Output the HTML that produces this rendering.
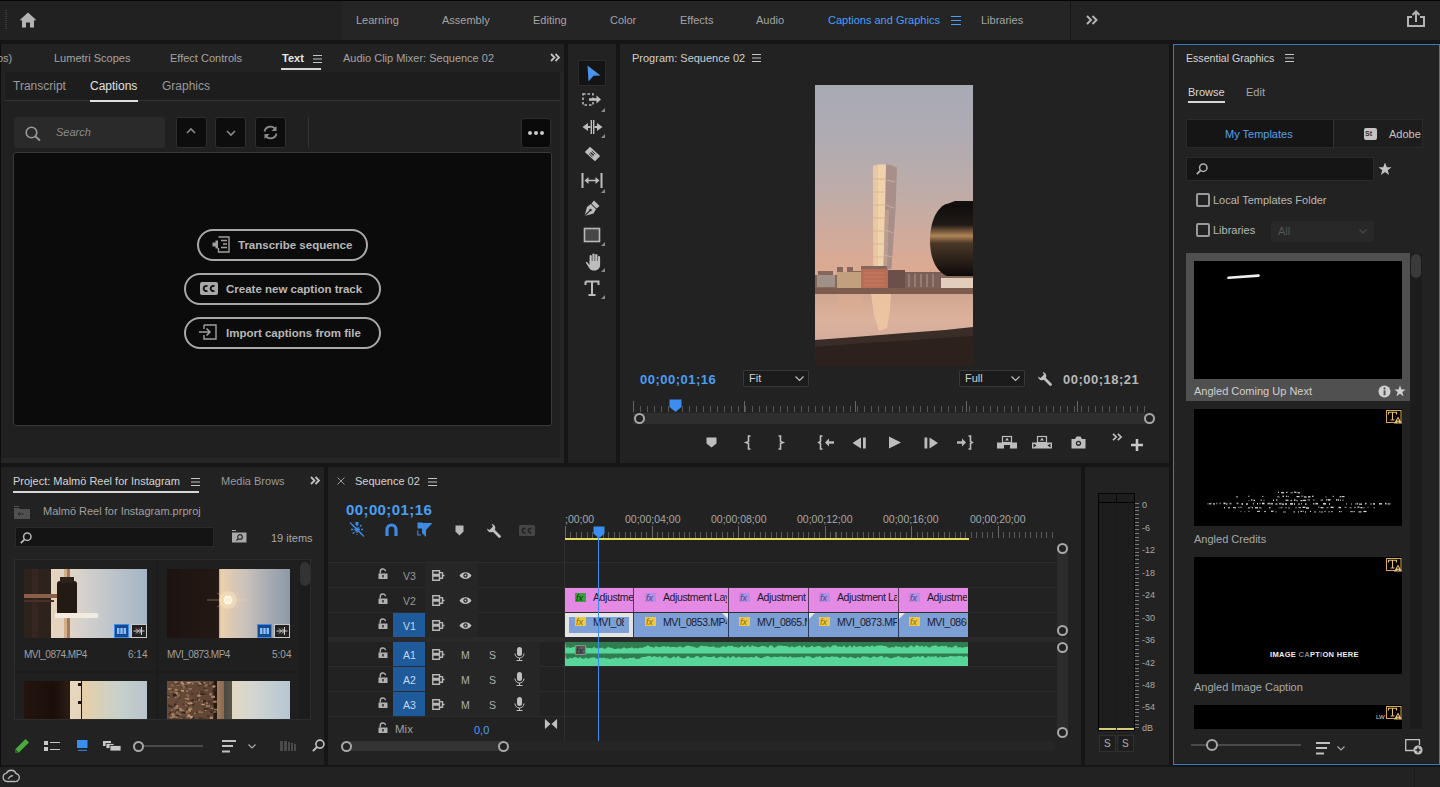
<!DOCTYPE html>
<html><head><meta charset="utf-8">
<style>
*{box-sizing:border-box;margin:0;padding:0}
html,body{width:1440px;height:787px;overflow:hidden;background:#151515;font-family:"Liberation Sans",sans-serif;color:#a8a8a8}
.a{position:absolute}
.t{position:absolute;white-space:nowrap;font-size:11px;line-height:1}
.p{position:absolute;background:#222}
svg{position:absolute;overflow:visible}
</style></head><body>
<!-- TOP BAR -->
<div class="p" style="left:0;top:0;width:1440px;height:40px;background:#232323;border-top:1px solid #050505"></div>

<!-- PANELS -->
<div class="p" id="textpanel" style="left:0;top:44px;width:564px;height:419px"></div>
<div class="p" id="tools" style="left:568px;top:44px;width:48px;height:419px"></div>
<div class="p" id="program" style="left:620px;top:44px;width:549px;height:419px"></div>
<div class="p" id="eg" style="left:1173px;top:44px;width:267px;height:721px;border:1px solid #3d78c4"></div>
<div class="p" id="project" style="left:0;top:467px;width:324px;height:298px"></div>
<div class="p" id="timeline" style="left:328px;top:467px;width:753px;height:298px"></div>
<div class="p" id="meter" style="left:1085px;top:467px;width:84px;height:298px"></div>
<div class="p" id="status" style="left:0;top:767px;width:1440px;height:20px"></div>


<!-- TOP BAR CONTENT -->
<div class="a" style="left:0;top:1px;width:1440px;height:39px;background:#212121"></div>
<div class="a" style="left:342px;top:1px;width:728px;height:39px;background:#252525"></div>
<div class="a" style="left:1071px;top:1px;width:369px;height:39px;background:#232323"></div>
<div class="a" style="left:1070px;top:1px;width:1px;height:39px;background:#151515"></div>
<svg style="left:19px;top:12px" width="18" height="16" viewBox="0 0 18 16"><path d="M9 0.5 L17.5 8.2 L15 8.2 L15 15.5 L11 15.5 L11 10.5 L7 10.5 L7 15.5 L3 15.5 L3 8.2 L0.5 8.2 Z" fill="#b4b4b4"/></svg>
<div class="a" style="left:5px;top:10px;width:2px;height:19px;background:repeating-linear-gradient(#3a3a3a 0 1px,transparent 1px 2px)"></div>
<div class="t" style="left:356px;top:15px;color:#a4a4a4">Learning</div>
<div class="t" style="left:442px;top:15px;color:#a4a4a4">Assembly</div>
<div class="t" style="left:533px;top:15px;color:#a4a4a4">Editing</div>
<div class="t" style="left:610px;top:15px;color:#a4a4a4">Color</div>
<div class="t" style="left:680px;top:15px;color:#a4a4a4">Effects</div>
<div class="t" style="left:756px;top:15px;color:#a4a4a4">Audio</div>
<div class="t" style="left:828px;top:15px;color:#4a9ff5">Captions and Graphics</div>
<svg style="left:951px;top:16px" width="10" height="9" viewBox="0 0 10 9"><path d="M0 0.5H10M0 4.5H10M0 8.5H10" stroke="#4a9ff5" stroke-width="1"/></svg>
<div class="t" style="left:981px;top:15px;color:#a4a4a4">Libraries</div>
<svg style="left:1086px;top:15px" width="12" height="10" viewBox="0 0 12 10"><path d="M1 1L5 5L1 9M6.5 1L10.5 5L6.5 9" stroke="#b4b4b4" stroke-width="2" fill="none"/></svg>
<svg style="left:1407px;top:10px" width="18" height="17" viewBox="0 0 18 17"><path d="M5 7H1V16H17V7H13" stroke="#b4b4b4" stroke-width="2" fill="none"/><path d="M9 12V2M5.5 5L9 1.5L12.5 5" stroke="#b4b4b4" stroke-width="2" fill="none"/></svg>

<!-- TEXT PANEL CONTENT -->
<div class="a" style="left:560px;top:72px;width:4px;height:391px;background:#262626"></div>
<div class="a" style="left:1px;top:458px;width:563px;height:5px;background:#262626"></div>
<div class="a" style="left:1px;top:101px;width:559px;height:357px;background:#202020"></div>

<div class="a" style="left:0;top:44px;width:1px;height:723px;background:#0e0e0e"></div>
<div class="a" style="left:5px;top:72px;width:555px;height:29px;background:#1d1d1d"></div>
<div class="a" style="left:5px;top:100px;width:555px;height:1px;background:#333"></div>
<div class="t" style="left:-3px;top:53px;color:#a4a4a4">os)</div>
<div class="t" style="left:54px;top:53px;color:#a4a4a4">Lumetri Scopes</div>
<div class="t" style="left:170px;top:53px;color:#a4a4a4">Effect Controls</div>
<div class="t" style="left:282px;top:53px;color:#e6e6e6;font-weight:bold">Text</div>
<svg style="left:313px;top:55px" width="9" height="8" viewBox="0 0 9 8"><path d="M0 0.5H9M0 4H9M0 7.5H9" stroke="#c4c4c4" stroke-width="1"/></svg>
<div class="a" style="left:281px;top:68px;width:40px;height:2px;background:#d8d8d8"></div>
<div class="t" style="left:343px;top:53px;color:#a4a4a4">Audio Clip Mixer: Sequence 02</div>
<svg style="left:550px;top:53px" width="11" height="9" viewBox="0 0 11 9"><path d="M1 1L4.5 4.5L1 8M5.5 1L9 4.5L5.5 8" stroke="#c0c0c0" stroke-width="1.8" fill="none"/></svg>
<div class="t" style="left:13px;top:80px;font-size:12px;color:#9a9a9a">Transcript</div>
<div class="t" style="left:90px;top:80px;font-size:12px;color:#e0e0e0">Captions</div>
<div class="t" style="left:162px;top:80px;font-size:12px;color:#9a9a9a">Graphics</div>
<div class="a" style="left:90px;top:100px;width:48px;height:2px;background:#e0e0e0"></div>
<!-- search row -->
<div class="a" style="left:14px;top:117px;width:151px;height:31px;background:#2a2a2a;border-radius:3px"></div>
<svg style="left:25px;top:126px" width="16" height="15" viewBox="0 0 16 15"><circle cx="6.5" cy="6.5" r="5.3" stroke="#9a9a9a" stroke-width="1.6" fill="none"/><path d="M10.5 10.5L15 14.5" stroke="#9a9a9a" stroke-width="1.8"/></svg>
<div class="t" style="left:56px;top:127px;font-style:italic;color:#8a8a8a">Search</div>
<div class="a" style="left:176px;top:117px;width:31px;height:31px;background:#0d0d0d;border:1px solid #2e2e2e;border-radius:3px"></div>
<svg style="left:186px;top:128px" width="10" height="6" viewBox="0 0 10 6"><path d="M1 5L5 1L9 5" stroke="#8a8a8a" stroke-width="1.6" fill="none"/></svg>
<div class="a" style="left:215px;top:117px;width:31px;height:31px;background:#0d0d0d;border:1px solid #2e2e2e;border-radius:3px"></div>
<svg style="left:226px;top:130px" width="10" height="6" viewBox="0 0 10 6"><path d="M1 1L5 5L9 1" stroke="#8a8a8a" stroke-width="1.6" fill="none"/></svg>
<div class="a" style="left:255px;top:117px;width:31px;height:31px;background:#0d0d0d;border:1px solid #2e2e2e;border-radius:3px"></div>
<svg style="left:262px;top:124px" width="17" height="17" viewBox="0 0 17 17"><path d="M2.5 7.5A6 6 0 0 1 13.5 5.5M14.5 9.5A6 6 0 0 1 3.5 11.5" stroke="#8a8a8a" stroke-width="1.8" fill="none"/><path d="M14.5 2V7H9.5Z M2.5 15V10H7.5Z" fill="#8a8a8a"/></svg>
<div class="a" style="left:308px;top:117px;width:1px;height:31px;background:#333"></div>
<div class="a" style="left:521px;top:118px;width:30px;height:30px;background:#0a0a0a;border:1px solid #2e2e2e;border-radius:3px"></div>
<div class="a" style="left:528px;top:131px;width:4px;height:4px;border-radius:2px;background:#c8c8c8"></div>
<div class="a" style="left:534px;top:131px;width:4px;height:4px;border-radius:2px;background:#c8c8c8"></div>
<div class="a" style="left:540px;top:131px;width:4px;height:4px;border-radius:2px;background:#c8c8c8"></div>
<!-- captions box -->
<div class="a" style="left:13px;top:152px;width:539px;height:274px;background:#0b0b0b;border:1px solid #393939;border-radius:3px"></div>
<div class="a" style="left:197px;top:229px;width:171px;height:32px;border:2px solid #a8a8a8;border-radius:16px"></div>
<div class="a" style="left:184px;top:273px;width:197px;height:32px;border:2px solid #a8a8a8;border-radius:16px"></div>
<div class="a" style="left:184px;top:317px;width:197px;height:32px;border:2px solid #a8a8a8;border-radius:16px"></div>
<div class="t" style="left:238px;top:240px;font-size:11.5px;font-weight:bold;color:#b8b8b8">Transcribe sequence</div>
<div class="t" style="left:226px;top:284px;font-size:11.5px;font-weight:bold;color:#b8b8b8">Create new caption track</div>
<div class="t" style="left:226px;top:328px;font-size:11.5px;font-weight:bold;color:#b8b8b8">Import captions from file</div>
<svg style="left:212px;top:236px" width="18" height="17" viewBox="0 0 18 17"><path d="M6.5 1H17V16H6.5V12" stroke="#a0a0a0" stroke-width="1.4" fill="none"/><path d="M9 4.5H15M11 8H15M9 11.5H15" stroke="#a0a0a0" stroke-width="1.4"/><path d="M0.5 6.5H3.5V4.5H6V12.5H3.5V10.5H0.5Z" fill="#a0a0a0"/></svg>
<svg style="left:200px;top:282px" width="18" height="13" viewBox="0 0 18 13"><rect x="0" y="0" width="18" height="13" rx="2" fill="#a8a8a8"/><path d="M7.5 4.2A2.6 2.6 0 1 0 7.5 8.8M14.5 4.2A2.6 2.6 0 1 0 14.5 8.8" stroke="#0b0b0b" stroke-width="1.8" fill="none"/></svg>
<svg style="left:199px;top:324px" width="18" height="16" viewBox="0 0 18 16"><path d="M5 1H17V15H5V11M5 5V1" stroke="#a0a0a0" stroke-width="1.4" fill="none"/><path d="M0 8H11M7.5 4.5L11 8L7.5 11.5" stroke="#a0a0a0" stroke-width="1.5" fill="none"/></svg>

<!-- TOOLS -->
<div class="a" style="left:578px;top:60px;width:28px;height:26px;background:#141414;border:1px solid #2c2c2c"></div>
<svg style="left:587px;top:65px" width="14" height="17" viewBox="0 0 14 17"><path d="M0.5 0.5L13.5 10.5L6.5 10.8L1.5 16.5Z" fill="#4a92ea"/></svg>
<svg style="left:582px;top:93px" width="24" height="19" viewBox="0 0 24 19"><rect x="1" y="1" width="10" height="11" stroke="#c0c0c0" stroke-width="1.5" stroke-dasharray="2.5 2" fill="none"/><path d="M7 6.5H15.5" stroke="#c0c0c0" stroke-width="2.6"/><path d="M14.5 2.5L19 6.5L14.5 10.5Z" fill="#c0c0c0"/><path d="M23 15V19H19Z" fill="#8a8a8a"/></svg>
<svg style="left:582px;top:119px" width="24" height="20" viewBox="0 0 24 20"><path d="M9.3 1V15M11.7 1V15" stroke="#bdbdbd" stroke-width="1.4"/><path d="M0.5 8L6 4V12Z M20.5 8L15 4V12Z" fill="#bdbdbd"/><path d="M5 8H8.5M12.5 8H16" stroke="#bdbdbd" stroke-width="2"/><path d="M23 15V19H19Z" fill="#8a8a8a"/></svg>
<svg style="left:584px;top:146px" width="17" height="16" viewBox="0 0 17 16"><path d="M6 0.8L16.2 10L11 15.2L0.8 6Z" fill="#bdbdbd"/><path d="M6.5 6.5L9.8 9.5" stroke="#222222" stroke-width="1.3"/><path d="M7.8 5L11.3 8.2M5 7.8L8.5 11" stroke="#222222" stroke-width="0.9"/></svg>
<svg style="left:581px;top:173px" width="25" height="21" viewBox="0 0 25 21"><path d="M1.5 0V15M20.5 0V15" stroke="#bdbdbd" stroke-width="2"/><path d="M5 7.5H17" stroke="#bdbdbd" stroke-width="1.6"/><path d="M3.5 7.5L7.5 4V11Z M18.5 7.5L14.5 4V11Z" fill="#bdbdbd"/><path d="M24 16V20H20Z" fill="#8a8a8a"/></svg>
<svg style="left:583px;top:199px" width="18" height="18" viewBox="0 0 18 18"><path d="M11 1.5L16.5 7L13.5 9.5L8.5 4.5Z" fill="#bdbdbd"/><path d="M7.8 5L13 10.2L10.5 14.5L1.5 17L4 8Z" fill="#bdbdbd"/><path d="M1.5 17L7 11.5" stroke="#222222" stroke-width="1.1"/><circle cx="7.5" cy="11" r="1.2" fill="#222222"/></svg>
<svg style="left:583px;top:227px" width="23" height="20" viewBox="0 0 23 20"><rect x="1.5" y="1.5" width="15" height="13" fill="#474747" stroke="#b8b8b8" stroke-width="1.6"/><path d="M22 15V19H18Z" fill="#8a8a8a"/></svg>
<svg style="left:583px;top:253px" width="23" height="20" viewBox="0 0 23 20"><g transform="translate(21.5,0) scale(-1,1)"><g stroke="#bdbdbd" stroke-width="2.2" stroke-linecap="round"><path d="M5.5 9V4"/><path d="M8.2 8V2"/><path d="M11 8V1.5"/><path d="M13.8 8.5V3"/></g><path d="M4.4 8H15V12L17.2 9.3C17.9 8.5 19 9 18.5 10L15 15.5C14 17 12.5 17.5 10.5 17.5C7 17.5 4.4 15.5 4.4 12Z" fill="#bdbdbd"/></g><path d="M22 15V19H18Z" fill="#8a8a8a"/></svg>
<svg style="left:584px;top:280px" width="22" height="20" viewBox="0 0 22 20"><path d="M1.5 1.5H14.5V5M1.5 1.5V5M8 1.5V15M4.5 15H11.5" stroke="#bdbdbd" stroke-width="2" fill="none"/><path d="M21 15V19H17Z" fill="#8a8a8a"/></svg>

<!-- PROGRAM MONITOR -->
<div class="t" style="left:632px;top:53px;color:#cfcfcf">Program: Sequence 02</div>
<svg style="left:752px;top:54px" width="9" height="8" viewBox="0 0 9 8"><path d="M0 0.5H9M0 4H9M0 7.5H9" stroke="#c4c4c4" stroke-width="1"/></svg>
<div id="video" class="a" style="left:815px;top:85px;width:158px;height:281px;overflow:hidden;background:linear-gradient(180deg,#a8aab5 0%,#afabb3 18%,#bcaca9 36%,#cbab9f 50%,#d9aa95 62%,#dfa98f 70%)">
 <svg style="left:0;top:0" width="158" height="281" viewBox="0 0 158 281">
  <defs>
   <linearGradient id="tw" x1="0" y1="0" x2="1" y2="0"><stop offset="0" stop-color="#e6cdb2"/><stop offset="0.5" stop-color="#f3e2cc"/><stop offset="0.62" stop-color="#d8c0a8"/><stop offset="1" stop-color="#9c8a88"/></linearGradient>
   <linearGradient id="wt" x1="0" y1="0" x2="0" y2="1"><stop offset="0" stop-color="#d0a690"/><stop offset="0.5" stop-color="#dcb29c"/><stop offset="1" stop-color="#d2ac9c"/></linearGradient>
   <linearGradient id="lh" x1="0" y1="0" x2="0" y2="1"><stop offset="0" stop-color="#0e0c0c"/><stop offset="0.3" stop-color="#201a16"/><stop offset="0.45" stop-color="#b08458"/><stop offset="0.55" stop-color="#4a3828"/><stop offset="1" stop-color="#0c0a0a"/></linearGradient>
  </defs>
  <path d="M58 81L63 79.5H71L71 184H58.5Z" fill="#efd3ac"/>
  <path d="M71 79.5L76 80L82 82.5L80.5 125L76.5 184H68.5L70 125Z" fill="#a98f8a"/>
  <path d="M70 125L68.5 184H72L74 125Z" fill="#c8a890" opacity="0.6"/>
  <path d="M58 80H63V184H58.5Z" fill="#e2c09c" opacity="0.6"/>
  <path d="M58 94H71M58 107H71M58 120H70.5M58 133H70M58 146H70M58 159H69.5M58.5 172H69" stroke="#d8b08a" stroke-width="0.8"/>
  <path d="M72 95L80 97M71 120L79 123M70.5 145L78 148M70 170L77 172" stroke="#d8c0b0" stroke-width="0.8" opacity="0.8"/>
  <path d="M0 190H3V186H18V190H22V182H28V188H32V182H38V186H46V181H72V185H90V187H126V185H138V189H158V205H0Z" fill="#84685c"/>
  <path d="M2 190H20V202H2Z" fill="#a09088"/>
  <path d="M22 187H46V203H22Z" fill="#c2a07e"/>
  <path d="M46 184H73V203H46Z" fill="#b86e56"/>
  <path d="M49 188H70M49 192H70M49 196H70M49 200H70" stroke="#d88a68" stroke-width="0.8" opacity="0.7"/>
  <path d="M73 185H90V203H73Z" fill="#6a5048"/>
  <path d="M90 187H126V203H90Z" fill="#7a6058"/>
  <path d="M94 189V202M100 189V202M106 189V202M112 189V202M118 189V202" stroke="#b89888" stroke-width="1"/>
  <path d="M126 193H158V203H126Z" fill="#e2cdbc"/>
  <path d="M0 203H158V210H0Z" fill="#7c5c4e"/>
  <rect x="0" y="209" width="158" height="50" fill="url(#wt)"/>
  <path d="M56 209H76L75 225L72 243L64 246L59 230Z" fill="#f0c8a2" opacity="0.85"/>
  <path d="M22 209H48V226H22Z" fill="#e0b090" opacity="0.35"/>
  <path d="M0 255L40 252L90 248L130 245L158 242V281H0Z" fill="#3a2c26"/>
  <path d="M0 262L50 258L100 255L158 251V281H0Z" fill="#2c211d"/>
  <path d="M158 118L131 119C120 124 115 140 115 155C115 172 120 186 132 191L158 191Z" fill="url(#lh)"/>
  <path d="M132 119L140 116H158V120H132Z" fill="#141010"/>
 </svg>
</div>
<div class="t" style="left:640px;top:373px;font-size:13px;font-weight:bold;letter-spacing:0.5px;color:#4a9ff5">00;00;01;16</div>
<div class="a" style="left:743px;top:370px;width:66px;height:17px;background:#1b1b1b;border:1px solid #383838;border-radius:2px"></div>
<div class="t" style="left:749px;top:373px;color:#d0d0d0">Fit</div>
<svg style="left:795px;top:376px" width="9" height="5" viewBox="0 0 9 5"><path d="M0.5 0.5L4.5 4.5L8.5 0.5" stroke="#c0c0c0" stroke-width="1.2" fill="none"/></svg>
<div class="a" style="left:959px;top:370px;width:66px;height:17px;background:#1b1b1b;border:1px solid #383838;border-radius:2px"></div>
<div class="t" style="left:965px;top:373px;color:#d0d0d0">Full</div>
<svg style="left:1011px;top:376px" width="9" height="5" viewBox="0 0 9 5"><path d="M0.5 0.5L4.5 4.5L8.5 0.5" stroke="#c0c0c0" stroke-width="1.2" fill="none"/></svg>
<svg style="left:1037px;top:371px" width="15" height="15" viewBox="0 0 15 15"><path d="M13.5 13.5L7 7" stroke="#c0c0c0" stroke-width="2.8" stroke-linecap="round"/><path d="M5.5 1A4 4 0 0 1 9 6.5L6.5 9A4 4 0 0 1 1 5.5L3.5 7L7 3.5Z" fill="#c0c0c0"/></svg>
<div class="t" style="left:1063px;top:373px;font-size:13px;font-weight:bold;letter-spacing:0.5px;color:#b8b8b8">00;00;18;21</div>
<div class="a" style="left:633px;top:413px;width:520px;height:11px;background:#2e2e2e"></div>
<div class="a" style="left:633px;top:401px;width:516px;height:11px;background:repeating-linear-gradient(90deg,#555 0 1px,transparent 1px 7px);-webkit-mask:linear-gradient(180deg,transparent 0 5px,#000 5px)"></div>
<div class="a" style="left:633px;top:401px;width:516px;height:11px;background:repeating-linear-gradient(90deg,#666 0 1px,transparent 1px 111px)"></div>
<svg style="left:669px;top:399px" width="13" height="13" viewBox="0 0 13 13"><path d="M0.5 0.5H12.5V8L7 12.5H6L0.5 8Z" fill="#3b8ef0"/></svg>
<div class="a" style="left:675px;top:412px;width:1px;height:0px;background:#3b8ef0"></div>
<div class="a" style="left:634px;top:413px;width:11px;height:11px;border-radius:6px;border:2px solid #a8a8a8;background:#222222"></div>
<div class="a" style="left:1144px;top:413px;width:11px;height:11px;border-radius:6px;border:2px solid #a8a8a8;background:#222222"></div>
<!-- transport -->
<svg style="left:706px;top:437px" width="11" height="11" viewBox="0 0 11 11"><path d="M0.5 0.5H10.5V6.5L5.5 10.5L0.5 6.5Z" fill="#bdbdbd"/></svg>
<svg style="left:745px;top:435px" width="7" height="15" viewBox="0 0 7 15"><path d="M5.5 1H3.5V6.5L1 7.5L3.5 8.5V14H5.5" stroke="#bdbdbd" stroke-width="1.6" fill="none"/></svg>
<svg style="left:777px;top:435px" width="7" height="15" viewBox="0 0 7 15"><path d="M1.5 1H3.5V6.5L6 7.5L3.5 8.5V14H1.5" stroke="#bdbdbd" stroke-width="1.6" fill="none"/></svg>
<svg style="left:818px;top:435px" width="16" height="15" viewBox="0 0 16 15"><path d="M4.5 1H2.5V6.5L0.8 7.5L2.5 8.5V14H4.5" stroke="#bdbdbd" stroke-width="1.6" fill="none"/><path d="M7 7.5L11 3.5V11.5Z" fill="#bdbdbd"/><path d="M10 7.5H16" stroke="#bdbdbd" stroke-width="2.4"/></svg>
<svg style="left:852px;top:437px" width="15" height="12" viewBox="0 0 15 12"><path d="M0.5 6L9 0.5V11.5Z" fill="#bdbdbd"/><rect x="11" y="0.5" width="2.8" height="11" fill="#bdbdbd"/></svg>
<svg style="left:888px;top:436px" width="14" height="13" viewBox="0 0 14 13"><path d="M1 0.5L13 6.5L1 12.5Z" fill="#bdbdbd"/></svg>
<svg style="left:924px;top:437px" width="15" height="12" viewBox="0 0 15 12"><rect x="0.5" y="0.5" width="2.8" height="11" fill="#bdbdbd"/><path d="M14 6L5.5 0.5V11.5Z" fill="#bdbdbd"/></svg>
<svg style="left:957px;top:435px" width="16" height="15" viewBox="0 0 16 15"><path d="M11.5 1H13.5V6.5L15.2 7.5L13.5 8.5V14H11.5" stroke="#bdbdbd" stroke-width="1.6" fill="none"/><path d="M9 7.5L5 3.5V11.5Z" fill="#bdbdbd"/><path d="M0 7.5H6" stroke="#bdbdbd" stroke-width="2.4"/></svg>
<svg style="left:997px;top:436px" width="21" height="13" viewBox="0 0 21 13"><rect x="5.5" y="0.5" width="9" height="6" fill="none" stroke="#bdbdbd" stroke-width="1.2"/><path d="M10 1.8L12 4.5H8Z" fill="#bdbdbd"/><rect x="0" y="6.5" width="7" height="6" fill="#bdbdbd"/><rect x="13" y="6.5" width="7" height="6" fill="#bdbdbd"/><rect x="5" y="6" width="10" height="3" fill="#bdbdbd"/></svg>
<svg style="left:1032px;top:436px" width="21" height="13" viewBox="0 0 21 13"><rect x="5.5" y="0.5" width="9" height="6" fill="none" stroke="#bdbdbd" stroke-width="1.2"/><path d="M10 1.8L12 4.5H8Z" fill="#bdbdbd"/><rect x="0" y="6.5" width="20" height="6" fill="#bdbdbd"/><path d="M1.5 7.5L4.5 9.5L1.5 11.5Z M18.5 7.5L15.5 9.5L18.5 11.5Z" fill="#222222"/></svg>
<svg style="left:1071px;top:436px" width="15" height="13" viewBox="0 0 15 13"><path d="M0.5 3H4L5.5 0.5H9.5L11 3H14.5V12.5H0.5Z" fill="#bdbdbd"/><circle cx="7.5" cy="7.3" r="2.6" fill="#222222"/><circle cx="7.5" cy="7.3" r="1.3" fill="#bdbdbd"/></svg>
<svg style="left:1112px;top:433px" width="11" height="8" viewBox="0 0 11 8"><path d="M1 0.8L4.3 4L1 7.2M5.8 0.8L9.1 4L5.8 7.2" stroke="#bdbdbd" stroke-width="1.7" fill="none"/></svg>
<svg style="left:1131px;top:439px" width="12" height="12" viewBox="0 0 12 12"><path d="M6 0V12M0 6H12" stroke="#c8c8c8" stroke-width="2.6"/></svg>

<!-- ESSENTIAL GRAPHICS -->
<div class="t" style="left:1186px;top:53px;font-size:10.6px;color:#d4d4d4">Essential Graphics</div>
<svg style="left:1285px;top:54px" width="9" height="8" viewBox="0 0 9 8"><path d="M0 0.5H9M0 4H9M0 7.5H9" stroke="#c4c4c4" stroke-width="1"/></svg>
<div class="t" style="left:1188px;top:87px;color:#d8d8d8">Browse</div>
<div class="a" style="left:1188px;top:101px;width:37px;height:2px;background:#d8d8d8"></div>
<div class="t" style="left:1246px;top:87px;color:#a8a8a8">Edit</div>
<div class="a" style="left:1186px;top:119px;width:237px;height:29px;background:#1d1d1d;border:1px solid #2a2a2a"></div>
<div class="a" style="left:1187px;top:120px;width:146px;height:27px;background:#151515"></div>
<div class="a" style="left:1333px;top:120px;width:1px;height:27px;background:#333"></div>
<div class="t" style="left:1225px;top:129px;color:#5aa0e8">My Templates</div>
<div class="a" style="left:1364px;top:128px;width:13px;height:12px;background:#c4c4c4;border-radius:2px"></div>
<div class="t" style="left:1365px;top:130px;font-size:7px;font-weight:bold;color:#333">St</div>
<div class="t" style="left:1389px;top:129px;color:#c4c4c4">Adobe</div>
<div class="a" style="left:1186px;top:157px;width:188px;height:24px;background:#151515;border:1px solid #2a2a2a"></div>
<svg style="left:1196px;top:163px" width="12" height="12" viewBox="0 0 12 12"><circle cx="7.3" cy="4.7" r="3.7" stroke="#b0b0b0" stroke-width="1.5" fill="none"/><path d="M4.6 7.4L0.8 11.2" stroke="#b0b0b0" stroke-width="1.8"/></svg>
<svg style="left:1378px;top:162px" width="14" height="14" viewBox="0 0 14 14"><path d="M7 0.5L8.8 5.2H13.5L9.7 8.2L11.1 13L7 10.1L2.9 13L4.3 8.2L0.5 5.2H5.2Z" fill="#c4c4c4"/></svg>
<div class="a" style="left:1196px;top:193px;width:14px;height:14px;border:2px solid #9a9a9a;border-radius:2px"></div>
<div class="t" style="left:1213px;top:195px;color:#b8b8b8">Local Templates Folder</div>
<div class="a" style="left:1196px;top:223px;width:14px;height:14px;border:2px solid #9a9a9a;border-radius:2px"></div>
<div class="t" style="left:1213px;top:225px;color:#b8b8b8">Libraries</div>
<div class="a" style="left:1271px;top:221px;width:103px;height:21px;background:#282828;border-radius:2px"></div>
<div class="t" style="left:1278px;top:226px;color:#555">All</div>
<svg style="left:1359px;top:229px" width="8" height="5" viewBox="0 0 8 5"><path d="M0.5 0.5L4 4L7.5 0.5" stroke="#4a4a4a" stroke-width="1.2" fill="none"/></svg>
<!-- list -->
<div class="a" style="left:1410px;top:253px;width:12px;height:476px;background:#1c1c1c"></div>
<div class="a" style="left:1411px;top:254px;width:10px;height:24px;background:#3a3a3a;border-radius:5px"></div>
<div class="a" style="left:1186px;top:253px;width:224px;height:148px;background:#505050"></div>
<div class="a" style="left:1194px;top:261px;width:208px;height:118px;background:#000"></div>
<svg style="left:1227px;top:273px" width="33" height="7" viewBox="0 0 33 7"><path d="M1.5 4.8L31.5 2.6" stroke="#f0f0f0" stroke-width="2.6" stroke-linecap="round"/></svg>
<div class="t" style="left:1194px;top:386px;color:#d0d0d0">Angled Coming Up Next</div>
<svg style="left:1378px;top:385px" width="13" height="13" viewBox="0 0 13 13"><circle cx="6.5" cy="6.5" r="6" fill="#d0d0d0"/><rect x="5.6" y="5.3" width="1.9" height="5" fill="#505050"/><circle cx="6.5" cy="3.4" r="1.1" fill="#505050"/></svg>
<svg style="left:1394px;top:385px" width="12" height="12" viewBox="0 0 14 14"><path d="M7 0.5L8.8 5.2H13.5L9.7 8.2L11.1 13L7 10.1L2.9 13L4.3 8.2L0.5 5.2H5.2Z" fill="#d0d0d0"/></svg>

<div class="a" style="left:1194px;top:409px;width:208px;height:117px;background:#000"></div>
<svg style="left:1200px;top:490px" width="196" height="28" viewBox="0 0 196 28"><g fill="#e8e8e8"><rect x="78.0" y="1.7" width="1" height="1.2" opacity="0.96"/><rect x="81.0" y="2.1" width="3" height="1.2" opacity="0.95"/><rect x="86.0" y="1.8" width="1.5" height="1.2" opacity="0.86"/><rect x="90.5" y="2.1" width="2.5" height="1.2" opacity="0.58"/><rect x="94.0" y="1.6" width="2.5" height="1.2" opacity="0.89"/><rect x="97.5" y="2.2" width="2.5" height="1.2" opacity="0.91"/><rect x="36.0" y="6.3" width="2" height="1.2" opacity="0.69"/><rect x="48.0" y="5.7" width="1.5" height="1.2" opacity="0.61"/><rect x="62.0" y="5.9" width="1.5" height="1.2" opacity="0.62"/><rect x="77.0" y="6.2" width="2.5" height="1.2" opacity="0.61"/><rect x="82.5" y="5.7" width="1.5" height="1.2" opacity="0.93"/><rect x="86.0" y="5.7" width="1" height="1.2" opacity="0.95"/><rect x="87.5" y="5.9" width="1.5" height="1.2" opacity="0.56"/><rect x="96.5" y="6.0" width="3" height="1.2" opacity="0.96"/><rect x="101.0" y="5.6" width="2.5" height="1.2" opacity="0.50"/><rect x="104.0" y="6.4" width="2.5" height="1.2" opacity="0.99"/><rect x="108.0" y="6.2" width="2.5" height="1.2" opacity="0.99"/><rect x="112.0" y="5.7" width="1.5" height="1.2" opacity="0.93"/><rect x="125.5" y="6.4" width="1" height="1.2" opacity="0.75"/><rect x="132.5" y="5.8" width="1.5" height="1.2" opacity="0.65"/><rect x="139.5" y="6.1" width="1.5" height="1.2" opacity="0.82"/><rect x="141.5" y="6.0" width="3" height="1.2" opacity="0.84"/><rect x="48.5" y="9.9" width="1" height="1.4" opacity="0.51"/><rect x="51.0" y="9.3" width="1.5" height="1.4" opacity="0.80"/><rect x="53.5" y="9.7" width="1.5" height="1.4" opacity="0.92"/><rect x="60.5" y="9.6" width="1.5" height="1.4" opacity="0.63"/><rect x="63.5" y="9.6" width="1" height="1.4" opacity="0.55"/><rect x="73.0" y="9.6" width="1" height="1.4" opacity="0.94"/><rect x="76.0" y="9.2" width="1.5" height="1.4" opacity="0.76"/><rect x="85.5" y="9.6" width="3" height="1.4" opacity="0.79"/><rect x="90.5" y="9.8" width="1.5" height="1.4" opacity="0.73"/><rect x="94.0" y="9.4" width="1.5" height="1.4" opacity="0.96"/><rect x="96.5" y="9.9" width="1" height="1.4" opacity="0.94"/><rect x="100.5" y="9.9" width="2" height="1.4" opacity="0.86"/><rect x="103.0" y="9.7" width="3" height="1.4" opacity="0.87"/><rect x="107.5" y="9.3" width="2.5" height="1.4" opacity="0.53"/><rect x="113.0" y="9.3" width="1.5" height="1.4" opacity="0.52"/><rect x="120.5" y="9.5" width="2.5" height="1.4" opacity="0.56"/><rect x="126.0" y="9.1" width="1.5" height="1.4" opacity="0.77"/><rect x="128.0" y="9.2" width="2.5" height="1.4" opacity="0.99"/><rect x="136.0" y="9.2" width="1.5" height="1.4" opacity="0.94"/><rect x="138.0" y="9.3" width="1" height="1.4" opacity="0.94"/><rect x="140.0" y="9.6" width="1" height="1.4" opacity="0.70"/><rect x="142.5" y="9.5" width="1" height="1.4" opacity="0.71"/><rect x="7.5" y="13.0" width="1" height="1.6" opacity="0.52"/><rect x="9.0" y="12.9" width="2.5" height="1.6" opacity="0.66"/><rect x="13.0" y="13.1" width="2" height="1.6" opacity="0.68"/><rect x="16.0" y="12.7" width="1.5" height="1.6" opacity="0.50"/><rect x="19.5" y="12.6" width="1" height="1.6" opacity="0.73"/><rect x="23.5" y="12.6" width="2" height="1.6" opacity="0.94"/><rect x="26.0" y="13.2" width="1.5" height="1.6" opacity="0.66"/><rect x="29.5" y="12.8" width="2" height="1.6" opacity="0.64"/><rect x="36.5" y="12.6" width="2" height="1.6" opacity="0.66"/><rect x="41.5" y="13.2" width="1.5" height="1.6" opacity="0.97"/><rect x="46.0" y="13.2" width="2" height="1.6" opacity="0.78"/><rect x="53.0" y="12.9" width="1" height="1.6" opacity="0.76"/><rect x="57.0" y="12.9" width="1" height="1.6" opacity="0.91"/><rect x="59.5" y="12.7" width="1" height="1.6" opacity="0.74"/><rect x="62.0" y="12.7" width="2.5" height="1.6" opacity="1.00"/><rect x="67.5" y="12.8" width="2.5" height="1.6" opacity="0.78"/><rect x="70.5" y="12.9" width="2.5" height="1.6" opacity="0.78"/><rect x="75.5" y="13.2" width="2" height="1.6" opacity="0.70"/><rect x="79.0" y="12.9" width="2.5" height="1.6" opacity="0.71"/><rect x="82.0" y="13.4" width="2" height="1.6" opacity="0.71"/><rect x="85.0" y="13.2" width="2" height="1.6" opacity="0.84"/><rect x="90.0" y="13.1" width="3" height="1.6" opacity="0.95"/><rect x="94.0" y="13.2" width="1" height="1.6" opacity="0.96"/><rect x="98.0" y="13.3" width="2" height="1.6" opacity="0.57"/><rect x="101.0" y="12.9" width="1" height="1.6" opacity="0.62"/><rect x="105.0" y="13.3" width="1.5" height="1.6" opacity="0.80"/><rect x="113.0" y="13.0" width="1.5" height="1.6" opacity="0.69"/><rect x="115.5" y="12.9" width="2.5" height="1.6" opacity="0.89"/><rect x="123.0" y="13.0" width="3" height="1.6" opacity="0.92"/><rect x="129.0" y="13.2" width="1" height="1.6" opacity="0.93"/><rect x="146.0" y="13.1" width="1" height="1.6" opacity="0.52"/><rect x="151.0" y="13.2" width="1" height="1.6" opacity="0.54"/><rect x="155.5" y="13.1" width="1" height="1.6" opacity="0.84"/><rect x="157.0" y="12.9" width="1" height="1.6" opacity="0.74"/><rect x="159.0" y="13.4" width="3" height="1.6" opacity="0.70"/><rect x="165.0" y="12.8" width="1.5" height="1.6" opacity="0.83"/><rect x="170.5" y="13.2" width="1" height="1.6" opacity="0.84"/><rect x="173.0" y="13.1" width="2" height="1.6" opacity="0.83"/><rect x="179.0" y="13.0" width="3" height="1.6" opacity="0.83"/><rect x="185.0" y="12.8" width="1.5" height="1.6" opacity="0.86"/><rect x="187.5" y="13.1" width="3" height="1.6" opacity="0.59"/><rect x="24.0" y="17.0" width="1" height="1.3" opacity="0.96"/><rect x="28.0" y="17.1" width="2" height="1.3" opacity="0.73"/><rect x="33.0" y="17.0" width="3" height="1.3" opacity="0.79"/><rect x="38.0" y="16.8" width="1.5" height="1.3" opacity="0.53"/><rect x="40.5" y="16.8" width="1" height="1.3" opacity="0.85"/><rect x="48.0" y="17.2" width="2" height="1.3" opacity="0.68"/><rect x="50.5" y="16.7" width="1" height="1.3" opacity="0.56"/><rect x="52.0" y="17.1" width="1" height="1.3" opacity="0.84"/><rect x="55.0" y="17.1" width="3" height="1.3" opacity="0.93"/><rect x="59.0" y="17.1" width="2.5" height="1.3" opacity="0.60"/><rect x="69.0" y="17.1" width="1.5" height="1.3" opacity="0.82"/><rect x="78.5" y="17.2" width="1" height="1.3" opacity="0.50"/><rect x="80.5" y="17.1" width="2" height="1.3" opacity="0.60"/><rect x="85.5" y="17.0" width="1" height="1.3" opacity="0.82"/><rect x="88.5" y="17.4" width="1" height="1.3" opacity="0.95"/><rect x="95.5" y="17.1" width="1" height="1.3" opacity="0.75"/><rect x="98.5" y="16.9" width="2.5" height="1.3" opacity="0.66"/><rect x="102.5" y="16.7" width="3" height="1.3" opacity="0.92"/><rect x="106.0" y="17.4" width="3" height="1.3" opacity="1.00"/><rect x="118.0" y="16.6" width="1.5" height="1.3" opacity="0.54"/><rect x="120.5" y="17.0" width="3" height="1.3" opacity="0.85"/><rect x="126.5" y="17.0" width="2" height="1.3" opacity="0.51"/><rect x="130.5" y="16.7" width="3" height="1.3" opacity="0.95"/><rect x="138.5" y="16.9" width="2.5" height="1.3" opacity="0.98"/><rect x="144.5" y="16.7" width="2" height="1.3" opacity="0.51"/><rect x="149.5" y="17.1" width="2" height="1.3" opacity="0.57"/><rect x="154.5" y="16.7" width="1" height="1.3" opacity="0.92"/><rect x="157.5" y="16.6" width="2" height="1.3" opacity="0.86"/><rect x="160.5" y="17.0" width="2" height="1.3" opacity="0.95"/><rect x="163.5" y="17.0" width="1" height="1.3" opacity="0.58"/><rect x="167.5" y="16.7" width="1" height="1.3" opacity="0.53"/><rect x="173.5" y="17.0" width="1.5" height="1.3" opacity="0.52"/><rect x="40.5" y="20.9" width="1" height="1.2" opacity="0.54"/><rect x="44.5" y="21.1" width="1" height="1.2" opacity="0.51"/><rect x="48.5" y="20.8" width="1" height="1.2" opacity="0.75"/><rect x="57.0" y="20.8" width="3" height="1.2" opacity="0.80"/><rect x="64.0" y="20.9" width="2" height="1.2" opacity="0.67"/><rect x="71.0" y="20.7" width="2.5" height="1.2" opacity="0.90"/><rect x="75.5" y="21.2" width="1" height="1.2" opacity="0.67"/><rect x="83.0" y="21.4" width="3" height="1.2" opacity="0.52"/><rect x="93.5" y="21.3" width="1.5" height="1.2" opacity="0.82"/><rect x="98.0" y="21.3" width="1" height="1.2" opacity="0.87"/><rect x="100.5" y="20.8" width="1.5" height="1.2" opacity="0.89"/><rect x="102.5" y="20.7" width="1.5" height="1.2" opacity="0.54"/><rect x="105.0" y="21.4" width="1" height="1.2" opacity="0.97"/><rect x="110.0" y="20.8" width="1" height="1.2" opacity="0.93"/><rect x="114.0" y="21.3" width="2" height="1.2" opacity="0.66"/><rect x="119.0" y="21.1" width="1" height="1.2" opacity="0.52"/><rect x="120.5" y="21.4" width="2.5" height="1.2" opacity="0.60"/><rect x="124.5" y="20.9" width="1" height="1.2" opacity="0.91"/><rect x="128.5" y="21.2" width="1" height="1.2" opacity="0.94"/><rect x="131.0" y="21.0" width="2" height="1.2" opacity="0.56"/><rect x="139.0" y="21.0" width="1" height="1.2" opacity="0.86"/><rect x="140.5" y="21.0" width="1.5" height="1.2" opacity="0.54"/><rect x="150.0" y="21.0" width="3" height="1.2" opacity="0.62"/><rect x="153.5" y="21.0" width="1.5" height="1.2" opacity="0.63"/><rect x="158.5" y="21.3" width="3" height="1.2" opacity="0.87"/><rect x="163.5" y="20.9" width="3" height="1.2" opacity="0.97"/></g></svg>
<div class="t" style="left:1194px;top:534px;font-size:11px;color:#a8a8a8">Angled Credits</div>

<div class="a" style="left:1194px;top:557px;width:208px;height:117px;background:#000"></div>
<div class="t" style="left:1270px;top:651px;font-size:7.5px;font-weight:bold;color:#f0f0f0;letter-spacing:0.3px">IMAGE <span style="color:#888">CA</span>PT<span style="color:#888">I</span>ON HERE</div>
<div class="t" style="left:1194px;top:682px;font-size:11px;color:#a8a8a8">Angled Image Caption</div>

<div class="a" style="left:1194px;top:705px;width:208px;height:24px;background:#000"></div>
<div class="t" style="left:1376px;top:714px;font-size:6px;color:#ddd">LW</div>

<svg style="left:1386px;top:410px" width="17" height="14" viewBox="0 0 17 14"><rect x="0.5" y="0.5" width="14.5" height="12" fill="#000" stroke="#d8a858" stroke-width="1"/><path d="M2.5 4.5V2.3H10.5V4.5M6.5 2.3V10M4.5 10H8.5" stroke="#e8c078" stroke-width="1.1" fill="none"/><path d="M12 6.5L16 13.5H8Z" fill="#e8c078"/><path d="M12 8.8V11.2M12 12V12.8" stroke="#000" stroke-width="1"/></svg>
<svg style="left:1386px;top:558px" width="17" height="14" viewBox="0 0 17 14"><rect x="0.5" y="0.5" width="14.5" height="12" fill="#000" stroke="#d8a858" stroke-width="1"/><path d="M2.5 4.5V2.3H10.5V4.5M6.5 2.3V10M4.5 10H8.5" stroke="#e8c078" stroke-width="1.1" fill="none"/><path d="M12 6.5L16 13.5H8Z" fill="#e8c078"/><path d="M12 8.8V11.2M12 12V12.8" stroke="#000" stroke-width="1"/></svg>
<svg style="left:1386px;top:706px" width="17" height="14" viewBox="0 0 17 14"><rect x="0.5" y="0.5" width="14.5" height="12" fill="#000" stroke="#d8a858" stroke-width="1"/><path d="M2.5 4.5V2.3H10.5V4.5M6.5 2.3V10M4.5 10H8.5" stroke="#e8c078" stroke-width="1.1" fill="none"/><path d="M12 6.5L16 13.5H8Z" fill="#e8c078"/><path d="M12 8.8V11.2M12 12V12.8" stroke="#000" stroke-width="1"/></svg>
<!-- bottom toolbar -->
<div class="a" style="left:1191px;top:744px;width:110px;height:2px;background:#4a4a4a"></div>
<div class="a" style="left:1206px;top:739px;width:12px;height:12px;border-radius:6px;border:2px solid #a8a8a8;background:#222222"></div>
<svg style="left:1316px;top:742px" width="15" height="13" viewBox="0 0 15 13"><path d="M0 1H14M0 6H11M0 11.5H8" stroke="#c0c0c0" stroke-width="1.8"/></svg>
<svg style="left:1337px;top:746px" width="8" height="5" viewBox="0 0 8 5"><path d="M0.5 0.5L4 4L7.5 0.5" stroke="#a8a8a8" stroke-width="1.2" fill="none"/></svg>
<svg style="left:1405px;top:739px" width="18" height="16" viewBox="0 0 18 16"><path d="M9 11.5H0.7V0.7H14.5V6" stroke="#c0c0c0" stroke-width="1.3" fill="none"/><circle cx="13" cy="11" r="4.6" fill="#c0c0c0"/><path d="M13 8.5V13.5M10.5 11H15.5" stroke="#222222" stroke-width="1.5"/></svg>

<!-- PROJECT PANEL -->
<div class="t" style="left:13px;top:476px;color:#d4d4d4">Project: Malmö Reel for Instagram</div>
<svg style="left:191px;top:478px" width="9" height="8" viewBox="0 0 9 8"><path d="M0 0.5H9M0 4H9M0 7.5H9" stroke="#c4c4c4" stroke-width="1"/></svg>
<div class="a" style="left:13px;top:491px;width:186px;height:2px;background:#d8d8d8"></div>
<div class="t" style="left:221px;top:476px;color:#9a9a9a">Media Brows</div>
<svg style="left:310px;top:476px" width="11" height="9" viewBox="0 0 11 9"><path d="M1 1L4.5 4.5L1 8M5.5 1L9 4.5L5.5 8" stroke="#c0c0c0" stroke-width="1.8" fill="none"/></svg>
<svg style="left:14px;top:506px" width="16" height="13" viewBox="0 0 16 13"><path d="M0 2H5L6 3H16V13H0Z" fill="#505050"/><path d="M0 0.5H5" stroke="#505050"/><path d="M4 8H10M6 6L4 8L6 10" stroke="#2a2a2a" stroke-width="1" fill="none"/></svg>
<div class="t" style="left:43px;top:506px;color:#a0a0a0">Malmö Reel for Instagram.prproj</div>
<div class="a" style="left:15px;top:527px;width:199px;height:20px;background:#141414;border:1px solid #2a2a2a"></div>
<svg style="left:20px;top:532px" width="12" height="12" viewBox="0 0 12 12"><circle cx="7.3" cy="4.7" r="3.7" stroke="#b8b8b8" stroke-width="1.5" fill="none"/><path d="M4.6 7.4L0.8 11.2" stroke="#b8b8b8" stroke-width="1.8"/></svg>
<svg style="left:232px;top:530px" width="15" height="13" viewBox="0 0 15 13"><path d="M0 2.5H14.5V12.5H0Z" fill="#a8a8a8"/><path d="M0 0.5H4" stroke="#a8a8a8"/><circle cx="8" cy="7" r="2.3" stroke="#2a2a2a" stroke-width="1.2" fill="none"/><path d="M6.3 8.7L4.5 10.5" stroke="#2a2a2a" stroke-width="1.3"/></svg>
<div class="t" style="left:271px;top:533px;color:#a8a8a8">19 items</div>
<div class="a" style="left:14px;top:559px;width:297px;height:161px;background:#1c1c1c;border:1px solid #2c2c2c;overflow:hidden">
 <div class="a" style="left:0;top:0;width:141px;height:111px;background:#1f1f1f"></div>
 <div class="a" style="left:143px;top:0;width:141px;height:111px;background:#1f1f1f"></div>
 <div class="a" style="left:0;top:113px;width:141px;height:60px;background:#1f1f1f"></div>
 <div class="a" style="left:143px;top:113px;width:141px;height:60px;background:#1f1f1f"></div>
 <div class="a" style="left:285px;top:2px;width:10px;height:24px;background:#333;border-radius:5px"></div>
</div>
<!-- thumb1 -->
<div class="a" style="left:24px;top:569px;width:123px;height:69px;overflow:hidden;background:linear-gradient(90deg,#2a1e1a 0,#35251f 27px,#e8d4bc 27px,#e4d2bc 31px,#e0d6ca 45px,#c4c8cc 80px,#a4b4c6 123px)">
 <svg style="left:0;top:0" width="123" height="69" viewBox="0 0 123 69">
  <path d="M0 0H27V69H0Z" fill="#2e221d"/>
  <path d="M8 0H14V69H8Z" fill="#3a2a24" opacity="0.6"/>
  <path d="M40 0H46V69H40Z" fill="#d4ae88"/>
  <path d="M43 0H46V69H43Z" fill="#a87858"/>
  <path d="M0 25H52V29H0Z" fill="#8c6048"/>
  <path d="M0 31H30V33H0Z" fill="#4a3028"/>
  <rect x="33" y="12" width="20" height="34" rx="3" fill="#231915"/>
  <rect x="36" y="8" width="14" height="6" fill="#2e221c"/>
  <path d="M31 44H72A2.5 2.5 0 0 1 72 49H31Z" fill="#f2ebe0"/>
 </svg>
</div>
<!-- thumb2 -->
<div class="a" style="left:167px;top:569px;width:123px;height:69px;overflow:hidden;background:linear-gradient(90deg,#1c1310 0,#241814 52px,#ead2b0 54px,#e2cbb0 60px,#cbc2bb 78px,#a9adb3 100px,#8d99a7 123px)">
 <svg style="left:0;top:0" width="123" height="69" viewBox="0 0 123 69">
  <path d="M52 0H56V69H52Z" fill="#e8ceaa" opacity="0.8"/>
  <circle cx="61" cy="31" r="9" fill="#ffe8c0" opacity="0.45"/>
  <circle cx="61" cy="31" r="4.5" fill="#fffaf0"/>
  <path d="M40 31H80M61 18V44M50 24L72 38M50 38L72 24" stroke="#ffd8a0" stroke-width="0.8" opacity="0.5"/>
 </svg>
</div>
<!-- row2 thumbs -->
<div class="a" style="left:24px;top:681px;width:123px;height:38px;overflow:hidden;background:linear-gradient(90deg,#24140f 0,#1a0e0b 30px,#2a1a14 44px,#e8d8c0 44px,#e4d4bc 57px,#1a1410 57px,#1a1410 58px,#e8cfa6 58px,#d8d0b8 75px,#c8d0cc 95px,#b8c4cc 123px)">
 <svg style="left:0;top:0" width="123" height="38" viewBox="0 0 123 38"><path d="M40 0H46V38H42Z" fill="#2a1a14"/><rect x="54" y="2" width="3" height="3" fill="#1a1410"/><rect x="54" y="20" width="3" height="3" fill="#1a1410"/></svg>
</div>
<div class="a" style="left:167px;top:681px;width:123px;height:38px;overflow:hidden;background:linear-gradient(90deg,#6a4c3a 0,#5e4434 46px,#24180f 47px,#24180f 50px,#a07c5c 50px,#8a6a50 57px,#4a4840 57px,#585448 65px,#e2d8c2 65px,#d4d6d0 85px,#b6c6d2 123px)">
 <svg style="left:0;top:0" width="123" height="38" viewBox="0 0 123 38"><rect x="21.3" y="21.3" width="3.8" height="1.7" fill="#c8a080" opacity="0.88"/><rect x="8.9" y="30.5" width="2.7" height="1.9" fill="#b08a68" opacity="0.54"/><rect x="14.3" y="3.4" width="3.5" height="2.0" fill="#9a7a60" opacity="0.77"/><rect x="18.6" y="17.2" width="3.3" height="2.0" fill="#c8a080" opacity="0.51"/><rect x="24.8" y="2.3" width="2.0" height="1.4" fill="#9a7a60" opacity="0.85"/><rect x="15.3" y="22.5" width="2.0" height="1.4" fill="#4a3024" opacity="0.72"/><rect x="31.1" y="17.4" width="2.2" height="2.5" fill="#704c38" opacity="0.54"/><rect x="11.9" y="28.8" width="2.8" height="1.0" fill="#c8a080" opacity="0.84"/><rect x="18.8" y="32.2" width="2.5" height="2.4" fill="#704c38" opacity="0.81"/><rect x="10.0" y="35.2" width="1.6" height="1.6" fill="#3a2a20" opacity="0.68"/><rect x="3.4" y="23.9" width="3.4" height="1.4" fill="#9a7a60" opacity="0.64"/><rect x="0.7" y="15.6" width="3.8" height="1.2" fill="#3a2a20" opacity="0.55"/><rect x="2.8" y="30.3" width="1.9" height="1.8" fill="#2a1c16" opacity="0.73"/><rect x="46.3" y="29.2" width="2.5" height="1.6" fill="#2a1c16" opacity="0.69"/><rect x="10.0" y="10.3" width="3.9" height="2.2" fill="#4a3024" opacity="0.95"/><rect x="0.9" y="7.1" width="4.0" height="1.9" fill="#c8a080" opacity="0.55"/><rect x="46.5" y="8.1" width="2.1" height="2.2" fill="#4a3024" opacity="0.87"/><rect x="18.1" y="2.8" width="2.0" height="2.0" fill="#9a7a60" opacity="0.77"/><rect x="17.5" y="17.2" width="3.9" height="1.7" fill="#c8a080" opacity="0.56"/><rect x="18.1" y="23.8" width="2.3" height="1.3" fill="#c8a080" opacity="0.61"/><rect x="8.9" y="28.1" width="3.9" height="1.3" fill="#2a1c16" opacity="0.90"/><rect x="28.4" y="16.0" width="1.8" height="1.1" fill="#4a3024" opacity="0.61"/><rect x="33.1" y="9.8" width="3.6" height="1.9" fill="#4a3024" opacity="0.73"/><rect x="43.7" y="37.1" width="1.8" height="1.7" fill="#3a2a20" opacity="0.88"/><rect x="28.9" y="10.6" width="3.8" height="1.3" fill="#9a7a60" opacity="0.53"/><rect x="19.3" y="9.5" width="1.6" height="1.4" fill="#c8a080" opacity="0.76"/><rect x="6.2" y="13.8" width="3.7" height="2.5" fill="#3a2a20" opacity="0.83"/><rect x="24.5" y="36.0" width="3.0" height="2.4" fill="#2a1c16" opacity="0.91"/><rect x="32.9" y="36.6" width="1.6" height="2.0" fill="#2a1c16" opacity="0.53"/><rect x="14.6" y="5.2" width="1.7" height="1.7" fill="#4a3024" opacity="0.83"/><rect x="42.3" y="28.0" width="3.3" height="2.2" fill="#4a3024" opacity="0.66"/><rect x="32.2" y="34.2" width="3.7" height="1.6" fill="#704c38" opacity="0.51"/><rect x="23.5" y="0.6" width="3.2" height="1.6" fill="#9a7a60" opacity="0.77"/><rect x="3.8" y="24.3" width="4.0" height="2.3" fill="#3a2a20" opacity="0.65"/><rect x="43.9" y="26.4" width="2.6" height="1.7" fill="#c8a080" opacity="0.54"/><rect x="35.3" y="1.1" width="3.0" height="1.7" fill="#b08a68" opacity="0.93"/><rect x="5.3" y="29.6" width="3.2" height="1.7" fill="#9a7a60" opacity="0.67"/><rect x="6.7" y="23.2" width="2.8" height="2.1" fill="#4a3024" opacity="0.80"/><rect x="20.8" y="33.9" width="2.3" height="2.0" fill="#b08a68" opacity="0.79"/><rect x="37.8" y="28.7" width="2.0" height="1.3" fill="#b08a68" opacity="0.76"/><rect x="14.9" y="5.2" width="2.7" height="2.3" fill="#704c38" opacity="0.52"/><rect x="3.0" y="37.3" width="3.6" height="1.2" fill="#2a1c16" opacity="0.62"/><rect x="10.1" y="15.7" width="3.1" height="1.7" fill="#4a3024" opacity="0.82"/><rect x="39.6" y="23.7" width="2.3" height="2.2" fill="#4a3024" opacity="0.89"/><rect x="1.9" y="26.9" width="2.9" height="1.5" fill="#704c38" opacity="0.75"/><rect x="30.1" y="15.4" width="2.0" height="2.2" fill="#4a3024" opacity="0.61"/><rect x="6.6" y="1.8" width="3.1" height="1.7" fill="#3a2a20" opacity="0.74"/><rect x="30.1" y="14.0" width="1.7" height="1.3" fill="#704c38" opacity="0.71"/><rect x="8.4" y="0.4" width="2.7" height="2.1" fill="#b08a68" opacity="0.60"/><rect x="36.6" y="20.5" width="3.9" height="1.8" fill="#704c38" opacity="0.57"/><rect x="39.9" y="26.6" width="2.1" height="1.6" fill="#3a2a20" opacity="0.67"/><rect x="21.2" y="7.5" width="3.7" height="1.0" fill="#c8a080" opacity="0.76"/><rect x="41.3" y="30.3" width="3.9" height="1.7" fill="#3a2a20" opacity="0.94"/><rect x="4.7" y="32.9" width="3.5" height="2.4" fill="#9a7a60" opacity="0.60"/><rect x="42.3" y="37.3" width="3.9" height="1.8" fill="#704c38" opacity="0.92"/><rect x="12.3" y="27.3" width="1.5" height="1.8" fill="#9a7a60" opacity="0.70"/><rect x="25.9" y="29.2" width="2.7" height="1.0" fill="#704c38" opacity="0.89"/><rect x="20.2" y="1.3" width="2.8" height="2.0" fill="#b08a68" opacity="0.71"/><rect x="47.0" y="34.2" width="2.8" height="2.0" fill="#2a1c16" opacity="0.93"/><rect x="23.2" y="36.1" width="1.7" height="1.3" fill="#c8a080" opacity="0.75"/><rect x="39.1" y="21.3" width="1.9" height="1.8" fill="#c8a080" opacity="0.62"/><rect x="31.6" y="36.3" width="3.7" height="1.9" fill="#4a3024" opacity="0.88"/><rect x="45.5" y="19.9" width="2.9" height="1.3" fill="#c8a080" opacity="0.55"/><rect x="0.2" y="14.3" width="2.8" height="1.1" fill="#2a1c16" opacity="0.74"/><rect x="46.5" y="4.6" width="1.7" height="1.3" fill="#c8a080" opacity="0.71"/><rect x="43.3" y="30.4" width="2.5" height="1.4" fill="#2a1c16" opacity="0.56"/><rect x="20.4" y="31.0" width="3.8" height="1.7" fill="#4a3024" opacity="0.55"/><rect x="19.7" y="1.1" width="2.2" height="2.1" fill="#9a7a60" opacity="0.52"/><rect x="7.3" y="0.4" width="2.2" height="2.1" fill="#b08a68" opacity="0.78"/><rect x="4.9" y="27.8" width="1.8" height="1.8" fill="#4a3024" opacity="0.82"/><rect x="33.0" y="33.4" width="1.6" height="1.9" fill="#704c38" opacity="0.74"/><rect x="7.5" y="7.8" width="3.1" height="2.0" fill="#c8a080" opacity="0.60"/><rect x="25.5" y="22.3" width="1.8" height="2.4" fill="#3a2a20" opacity="0.86"/><rect x="42.4" y="12.0" width="2.3" height="2.4" fill="#b08a68" opacity="0.85"/><rect x="9.1" y="3.7" width="3.7" height="1.2" fill="#9a7a60" opacity="0.62"/><rect x="4.6" y="31.6" width="2.6" height="2.2" fill="#b08a68" opacity="0.59"/><rect x="29.5" y="30.4" width="1.7" height="1.9" fill="#4a3024" opacity="0.91"/><rect x="45.5" y="4.4" width="2.8" height="2.1" fill="#c8a080" opacity="0.95"/><rect x="39.1" y="30.5" width="2.7" height="1.0" fill="#704c38" opacity="0.75"/><rect x="24.2" y="21.6" width="1.9" height="1.3" fill="#b08a68" opacity="0.58"/><rect x="7.4" y="10.8" width="3.2" height="1.9" fill="#b08a68" opacity="0.93"/><rect x="21.7" y="29.1" width="2.3" height="1.7" fill="#c8a080" opacity="0.66"/><rect x="9.9" y="14.2" width="3.1" height="1.1" fill="#b08a68" opacity="0.58"/><rect x="21.3" y="28.1" width="2.5" height="1.3" fill="#b08a68" opacity="0.54"/><rect x="37.2" y="12.3" width="1.7" height="2.3" fill="#704c38" opacity="0.91"/><rect x="44.2" y="21.6" width="2.0" height="1.9" fill="#4a3024" opacity="0.86"/><rect x="12.1" y="34.6" width="3.4" height="2.2" fill="#704c38" opacity="0.92"/><rect x="6.3" y="12.5" width="2.8" height="1.6" fill="#2a1c16" opacity="0.84"/><rect x="19.1" y="27.5" width="1.7" height="1.5" fill="#2a1c16" opacity="0.55"/><rect x="41.7" y="37.6" width="3.8" height="1.1" fill="#4a3024" opacity="0.93"/><rect x="31.3" y="12.8" width="3.1" height="1.9" fill="#c8a080" opacity="0.53"/><rect x="24.2" y="18.9" width="2.0" height="1.2" fill="#2a1c16" opacity="0.94"/><rect x="1.1" y="23.4" width="3.3" height="1.4" fill="#2a1c16" opacity="0.73"/><rect x="35.8" y="24.6" width="1.5" height="1.4" fill="#4a3024" opacity="0.91"/><rect x="25.9" y="19.3" width="3.9" height="1.9" fill="#9a7a60" opacity="0.79"/><rect x="38.0" y="2.9" width="3.0" height="2.1" fill="#9a7a60" opacity="0.67"/><rect x="44.1" y="14.7" width="3.9" height="2.3" fill="#c8a080" opacity="0.78"/><rect x="2.8" y="35.9" width="2.6" height="1.8" fill="#c8a080" opacity="0.64"/><rect x="24.9" y="18.4" width="2.2" height="2.4" fill="#3a2a20" opacity="0.82"/><rect x="13.9" y="0.5" width="2.1" height="1.1" fill="#b08a68" opacity="0.68"/><rect x="32.2" y="2.0" width="2.3" height="1.6" fill="#c8a080" opacity="0.94"/><rect x="44.4" y="2.8" width="3.8" height="1.6" fill="#2a1c16" opacity="0.61"/><rect x="35.5" y="1.7" width="1.7" height="2.2" fill="#2a1c16" opacity="0.56"/><rect x="45.1" y="9.3" width="3.3" height="1.1" fill="#2a1c16" opacity="0.71"/><rect x="9.6" y="2.0" width="2.8" height="1.2" fill="#2a1c16" opacity="0.56"/><rect x="19.6" y="22.8" width="3.1" height="2.0" fill="#4a3024" opacity="0.85"/><rect x="24.9" y="37.9" width="3.9" height="2.1" fill="#b08a68" opacity="0.72"/><rect x="23.6" y="11.7" width="2.8" height="2.3" fill="#4a3024" opacity="0.62"/><rect x="32.2" y="21.5" width="3.0" height="1.9" fill="#704c38" opacity="0.61"/><rect x="44.7" y="19.1" width="3.1" height="1.3" fill="#3a2a20" opacity="0.52"/><rect x="2.9" y="10.3" width="2.6" height="1.9" fill="#9a7a60" opacity="0.60"/><rect x="13.1" y="28.7" width="3.8" height="1.2" fill="#b08a68" opacity="0.78"/><rect x="17.5" y="18.2" width="2.0" height="1.5" fill="#3a2a20" opacity="0.56"/><rect x="40.9" y="30.5" width="2.6" height="2.2" fill="#704c38" opacity="0.85"/><rect x="10.0" y="16.1" width="2.1" height="2.2" fill="#4a3024" opacity="0.57"/><rect x="39.3" y="22.7" width="2.2" height="2.1" fill="#704c38" opacity="0.91"/><rect x="20.1" y="14.0" width="1.7" height="2.3" fill="#9a7a60" opacity="0.74"/><rect x="20.3" y="21.6" width="3.5" height="1.7" fill="#704c38" opacity="0.85"/><rect x="3.6" y="8.1" width="3.2" height="1.1" fill="#4a3024" opacity="0.72"/><rect x="35.9" y="12.5" width="3.7" height="1.3" fill="#3a2a20" opacity="0.83"/><rect x="17.2" y="4.5" width="3.3" height="1.9" fill="#3a2a20" opacity="0.91"/><rect x="20.6" y="30.5" width="2.3" height="1.5" fill="#2a1c16" opacity="0.94"/><rect x="34.3" y="19.6" width="1.7" height="2.2" fill="#9a7a60" opacity="0.66"/><rect x="18.6" y="14.7" width="2.0" height="1.8" fill="#704c38" opacity="0.68"/><rect x="7.3" y="22.5" width="1.9" height="1.1" fill="#2a1c16" opacity="0.90"/><rect x="13.2" y="0.8" width="2.8" height="1.8" fill="#c8a080" opacity="0.63"/><rect x="1.0" y="32.0" width="2.6" height="1.9" fill="#4a3024" opacity="0.85"/><rect x="4.0" y="3.1" width="3.3" height="2.3" fill="#9a7a60" opacity="0.51"/><rect x="30.7" y="3.7" width="3.5" height="1.6" fill="#3a2a20" opacity="0.60"/><rect x="36.0" y="19.8" width="3.4" height="1.6" fill="#4a3024" opacity="0.86"/><rect x="15.6" y="5.2" width="2.7" height="2.2" fill="#9a7a60" opacity="0.82"/><rect x="43.0" y="15.6" width="3.6" height="2.0" fill="#704c38" opacity="0.50"/><rect x="17.8" y="3.4" width="2.7" height="1.8" fill="#9a7a60" opacity="0.74"/><rect x="33.4" y="30.5" width="2.6" height="1.6" fill="#b08a68" opacity="0.61"/><rect x="7.6" y="24.1" width="3.2" height="1.5" fill="#2a1c16" opacity="0.69"/><rect x="13.7" y="36.9" width="1.6" height="1.5" fill="#9a7a60" opacity="0.64"/><rect x="7.3" y="34.9" width="3.8" height="2.1" fill="#9a7a60" opacity="0.76"/><rect x="42.7" y="1.4" width="1.8" height="1.3" fill="#b08a68" opacity="0.76"/><rect x="28.2" y="17.9" width="2.8" height="1.7" fill="#4a3024" opacity="0.68"/><rect x="42.8" y="35.6" width="3.1" height="2.4" fill="#c8a080" opacity="0.72"/><rect x="12.2" y="33.7" width="3.8" height="1.5" fill="#c8a080" opacity="0.85"/><rect x="4.3" y="32.8" width="2.5" height="1.3" fill="#b08a68" opacity="0.86"/><rect x="18.1" y="20.0" width="2.8" height="1.4" fill="#9a7a60" opacity="0.80"/><rect x="11.2" y="0.4" width="2.7" height="1.6" fill="#704c38" opacity="0.61"/><rect x="19.8" y="33.2" width="2.5" height="2.2" fill="#b08a68" opacity="0.62"/><rect x="40.9" y="19.6" width="3.1" height="2.5" fill="#4a3024" opacity="0.73"/><rect x="2.5" y="21.7" width="1.9" height="1.3" fill="#704c38" opacity="0.57"/><rect x="6.0" y="13.4" width="3.0" height="1.8" fill="#2a1c16" opacity="0.81"/><rect x="3.9" y="28.4" width="2.9" height="1.8" fill="#9a7a60" opacity="0.86"/><rect x="19.6" y="34.8" width="1.7" height="2.2" fill="#b08a68" opacity="0.52"/><rect x="19.4" y="18.8" width="3.9" height="2.4" fill="#4a3024" opacity="0.64"/><rect x="3.6" y="11.6" width="2.7" height="2.1" fill="#4a3024" opacity="0.53"/><rect x="6.6" y="25.4" width="3.2" height="2.1" fill="#704c38" opacity="0.87"/><rect x="30.7" y="0.5" width="2.4" height="2.1" fill="#b08a68" opacity="0.63"/><rect x="5.3" y="29.3" width="3.6" height="2.3" fill="#3a2a20" opacity="0.59"/><rect x="29.0" y="11.0" width="2.4" height="1.8" fill="#4a3024" opacity="0.93"/><rect x="35.5" y="21.1" width="1.7" height="1.3" fill="#2a1c16" opacity="0.83"/><rect x="15.5" y="35.9" width="2.9" height="2.1" fill="#4a3024" opacity="0.70"/><rect x="18.0" y="3.9" width="3.1" height="1.2" fill="#3a2a20" opacity="0.82"/><rect x="8.5" y="15.3" width="3.6" height="1.9" fill="#9a7a60" opacity="0.55"/><rect x="1.5" y="37.5" width="2.6" height="2.2" fill="#4a3024" opacity="0.91"/><rect x="20.1" y="19.4" width="3.1" height="2.2" fill="#704c38" opacity="0.81"/><rect x="22.7" y="35.0" width="3.1" height="2.1" fill="#c8a080" opacity="0.81"/><rect x="46.2" y="30.0" width="3.2" height="1.9" fill="#9a7a60" opacity="0.62"/><rect x="8.9" y="11.7" width="2.6" height="1.8" fill="#b08a68" opacity="0.73"/><rect x="37.1" y="31.4" width="3.0" height="1.2" fill="#704c38" opacity="0.74"/><rect x="14.0" y="8.9" width="3.0" height="1.8" fill="#c8a080" opacity="0.82"/><rect x="46.4" y="19.6" width="3.3" height="2.3" fill="#b08a68" opacity="0.76"/><rect x="1.3" y="25.1" width="3.4" height="1.2" fill="#2a1c16" opacity="0.76"/><rect x="32.8" y="12.5" width="3.8" height="1.5" fill="#2a1c16" opacity="0.90"/><rect x="21.3" y="27.7" width="2.1" height="1.9" fill="#c8a080" opacity="0.75"/><rect x="26.3" y="10.0" width="3.8" height="2.5" fill="#704c38" opacity="0.65"/><rect x="6.8" y="35.5" width="1.5" height="2.0" fill="#4a3024" opacity="0.61"/><rect x="27.0" y="31.6" width="2.0" height="1.8" fill="#9a7a60" opacity="0.70"/><rect x="19.0" y="29.7" width="3.8" height="2.5" fill="#b08a68" opacity="0.64"/><rect x="31.5" y="28.0" width="2.5" height="1.9" fill="#704c38" opacity="0.84"/><rect x="7.5" y="15.7" width="1.6" height="1.8" fill="#9a7a60" opacity="0.76"/><rect x="8.2" y="19.8" width="2.2" height="1.9" fill="#4a3024" opacity="0.52"/><rect x="36.8" y="27.4" width="3.5" height="1.6" fill="#2a1c16" opacity="0.77"/><rect x="22.1" y="15.6" width="3.1" height="2.0" fill="#704c38" opacity="0.68"/><rect x="13.2" y="33.8" width="2.7" height="2.4" fill="#3a2a20" opacity="0.68"/><rect x="20.4" y="21.5" width="3.8" height="1.8" fill="#c8a080" opacity="0.73"/><rect x="19.8" y="0.9" width="3.8" height="1.4" fill="#c8a080" opacity="0.91"/><rect x="34.4" y="22.7" width="3.4" height="1.5" fill="#c8a080" opacity="0.89"/><rect x="11.5" y="32.1" width="2.1" height="2.3" fill="#9a7a60" opacity="0.71"/><rect x="5.0" y="34.6" width="2.9" height="2.0" fill="#b08a68" opacity="0.90"/><rect x="47.0" y="27.8" width="3.7" height="1.6" fill="#c8a080" opacity="0.69"/><rect x="37.8" y="8.4" width="3.4" height="1.9" fill="#9a7a60" opacity="0.54"/><rect x="37.2" y="4.7" width="2.8" height="2.4" fill="#9a7a60" opacity="0.63"/><rect x="34.2" y="0.9" width="1.9" height="1.7" fill="#2a1c16" opacity="0.87"/><rect x="18.7" y="13.5" width="3.0" height="1.1" fill="#9a7a60" opacity="0.70"/><rect x="14.7" y="12.3" width="1.9" height="2.2" fill="#704c38" opacity="0.71"/><rect x="9.7" y="11.2" width="3.8" height="2.3" fill="#b08a68" opacity="0.64"/><rect x="40.4" y="34.2" width="1.5" height="2.0" fill="#3a2a20" opacity="0.95"/><rect x="9.5" y="24.0" width="2.0" height="2.3" fill="#9a7a60" opacity="0.79"/><rect x="14.4" y="31.1" width="3.9" height="1.4" fill="#2a1c16" opacity="0.82"/><rect x="6.3" y="26.4" width="3.8" height="1.7" fill="#9a7a60" opacity="0.58"/><rect x="40.5" y="4.6" width="3.2" height="1.4" fill="#3a2a20" opacity="0.61"/><rect x="31.2" y="30.0" width="2.4" height="2.0" fill="#9a7a60" opacity="0.77"/><rect x="10.8" y="11.4" width="3.8" height="2.0" fill="#4a3024" opacity="0.56"/><rect x="31.4" y="17.6" width="1.7" height="2.4" fill="#9a7a60" opacity="0.74"/><rect x="2.1" y="22.8" width="2.2" height="1.4" fill="#704c38" opacity="0.76"/><rect x="7.7" y="37.6" width="2.0" height="1.3" fill="#3a2a20" opacity="0.75"/><rect x="8.8" y="34.1" width="4.0" height="1.1" fill="#2a1c16" opacity="0.91"/><rect x="27.5" y="0.1" width="3.7" height="1.1" fill="#9a7a60" opacity="0.75"/><rect x="30.3" y="13.7" width="3.1" height="2.2" fill="#c8a080" opacity="0.63"/><rect x="38.9" y="24.1" width="4.0" height="2.1" fill="#c8a080" opacity="0.58"/><rect x="36.6" y="6.3" width="3.0" height="1.4" fill="#2a1c16" opacity="0.75"/><rect x="12.0" y="27.2" width="3.3" height="1.4" fill="#c8a080" opacity="0.60"/><rect x="27.3" y="19.0" width="1.6" height="1.9" fill="#3a2a20" opacity="0.52"/><rect x="21.1" y="33.5" width="2.3" height="1.9" fill="#c8a080" opacity="0.72"/><rect x="20.4" y="16.8" width="2.2" height="2.2" fill="#9a7a60" opacity="0.55"/><rect x="8.4" y="24.3" width="2.9" height="2.1" fill="#c8a080" opacity="0.57"/><rect x="14.6" y="1.6" width="2.3" height="1.9" fill="#c8a080" opacity="0.85"/><rect x="36.0" y="18.9" width="3.1" height="1.8" fill="#2a1c16" opacity="0.61"/><rect x="7.5" y="26.2" width="3.6" height="2.2" fill="#9a7a60" opacity="0.64"/><rect x="21.9" y="26.5" width="3.3" height="2.4" fill="#b08a68" opacity="0.72"/><rect x="35.8" y="37.5" width="1.9" height="1.7" fill="#3a2a20" opacity="0.94"/><rect x="0.2" y="15.6" width="2.8" height="1.1" fill="#c8a080" opacity="0.63"/><rect x="19.9" y="2.9" width="1.6" height="2.5" fill="#704c38" opacity="0.94"/></svg>
</div>
<!-- media badges -->
<svg style="left:114px;top:624px" width="33" height="14" viewBox="0 0 33 14"><rect x="0.5" y="0.5" width="14" height="13" fill="#1a4a8a" stroke="#3a8ef0"/><rect x="3" y="4" width="2.4" height="6" fill="#8ac0ff"/><rect x="6.3" y="4" width="2.4" height="6" fill="#8ac0ff"/><rect x="9.6" y="4" width="2.4" height="6" fill="#8ac0ff"/><rect x="17.5" y="0.5" width="15" height="13" fill="#222" stroke="#c8c8c8"/><path d="M19.5 7H30.5M22 4.5L24.5 7L22 9.5M25 4.5L27.5 7L25 9.5M27.5 3V11" stroke="#d0d0d0" stroke-width="1" fill="none"/></svg>
<svg style="left:257px;top:624px" width="33" height="14" viewBox="0 0 33 14"><rect x="0.5" y="0.5" width="14" height="13" fill="#1a4a8a" stroke="#3a8ef0"/><rect x="3" y="4" width="2.4" height="6" fill="#8ac0ff"/><rect x="6.3" y="4" width="2.4" height="6" fill="#8ac0ff"/><rect x="9.6" y="4" width="2.4" height="6" fill="#8ac0ff"/><rect x="17.5" y="0.5" width="15" height="13" fill="#222" stroke="#c8c8c8"/><path d="M19.5 7H30.5M22 4.5L24.5 7L22 9.5M25 4.5L27.5 7L25 9.5M27.5 3V11" stroke="#d0d0d0" stroke-width="1" fill="none"/></svg>
<div class="t" style="left:24px;top:650px;font-size:10px;letter-spacing:-0.5px;color:#a0a0a0">MVI_0874.MP4</div>
<div class="t" style="left:128px;top:650px;font-size:10px;color:#a0a0a0">6:14</div>
<div class="t" style="left:167px;top:650px;font-size:10px;letter-spacing:-0.5px;color:#a0a0a0">MVI_0873.MP4</div>
<div class="t" style="left:272px;top:650px;font-size:10px;color:#a0a0a0">5:04</div>
<!-- project toolbar -->
<svg style="left:14px;top:738px" width="16" height="16" viewBox="0 0 16 16"><path d="M11.5 1L15 4.5L5 14.5L1 15L1.5 11Z" fill="#4caa3c"/><path d="M1 15L1.5 11L5 14.5Z" fill="#2a5a22"/></svg>
<svg style="left:44px;top:741px" width="17" height="10" viewBox="0 0 17 10"><rect x="0" y="0" width="4" height="4" fill="#c8c8c8"/><rect x="0" y="6" width="4" height="4" fill="#c8c8c8"/><path d="M6 1.5H16M6 8.5H16" stroke="#c8c8c8" stroke-width="1.2"/></svg>
<svg style="left:77px;top:740px" width="11" height="11" viewBox="0 0 11 11"><rect x="0" y="0" width="10.5" height="8" fill="#3a8ef0"/><path d="M1 10.3H10" stroke="#3a8ef0" stroke-width="1"/></svg>
<svg style="left:103px;top:741px" width="18" height="10" viewBox="0 0 18 10"><rect x="0" y="0" width="8" height="5" fill="#c8c8c8"/><rect x="3" y="2.5" width="8" height="5" fill="#c8c8c8" stroke="#222222" stroke-width="0.8"/><rect x="7" y="4.5" width="11" height="5.5" fill="#c8c8c8" stroke="#222222" stroke-width="0.8"/></svg>
<div class="a" style="left:140px;top:745px;width:63px;height:2px;background:#4a4a4a"></div>
<div class="a" style="left:133px;top:741px;width:11px;height:11px;border-radius:6px;border:2px solid #a8a8a8;background:#222222"></div>
<svg style="left:222px;top:740px" width="15" height="13" viewBox="0 0 15 13"><path d="M0 1H14M0 6H11M0 11.5H8" stroke="#c0c0c0" stroke-width="1.8"/></svg>
<svg style="left:248px;top:744px" width="8" height="5" viewBox="0 0 8 5"><path d="M0.5 0.5L4 4L7.5 0.5" stroke="#a8a8a8" stroke-width="1.2" fill="none"/></svg>
<svg style="left:280px;top:740px" width="16" height="11" viewBox="0 0 16 11"><rect x="0" y="1" width="3" height="10" fill="#4a4a4a"/><rect x="4" y="1" width="3" height="10" fill="#4a4a4a"/><rect x="8" y="2" width="2" height="9" fill="#4a4a4a"/><rect x="11" y="3" width="2" height="8" fill="#4a4a4a"/><rect x="14" y="4" width="2" height="7" fill="#4a4a4a"/></svg>
<svg style="left:312px;top:739px" width="13" height="13" viewBox="0 0 12 12"><circle cx="7.3" cy="4.7" r="3.7" stroke="#c0c0c0" stroke-width="1.5" fill="none"/><path d="M4.6 7.4L0.8 11.2" stroke="#c0c0c0" stroke-width="1.8"/></svg>

<!-- TIMELINE -->
<svg style="left:337px;top:477px" width="8" height="8" viewBox="0 0 8 8"><path d="M0.5 0.5L7.5 7.5M7.5 0.5L0.5 7.5" stroke="#9a9a9a" stroke-width="1"/></svg>
<div class="t" style="left:355px;top:476px;color:#d4d4d4">Sequence 02</div>
<svg style="left:428px;top:478px" width="9" height="8" viewBox="0 0 9 8"><path d="M0 0.5H9M0 4H9M0 7.5H9" stroke="#c4c4c4" stroke-width="1"/></svg>
<div class="t" style="left:346px;top:502px;font-size:15px;font-weight:bold;letter-spacing:0.4px;color:#4a9ff5">00;00;01;16</div>
<svg style="left:349px;top:522px" width="16" height="15" viewBox="0 0 16 15"><path d="M8 2V13M2 7.5H14M3.5 3L12.5 12M12.5 3L3.5 12" stroke="#3f8ae0" stroke-width="1.3" stroke-dasharray="2.2 1.2"/><path d="M1 0.5L15 14.5" stroke="#3f8ae0" stroke-width="1.3"/><rect x="6.5" y="0" width="3" height="3" fill="#3f8ae0"/></svg>
<svg style="left:385px;top:523px" width="13" height="14" viewBox="0 0 13 14"><path d="M2 13V6.5A4.5 4.5 0 0 1 11 6.5V13" stroke="#3f8ae0" stroke-width="3.2" fill="none"/></svg>
<svg style="left:417px;top:522px" width="16" height="15" viewBox="0 0 16 15"><rect x="0.5" y="0.5" width="5" height="6" fill="#3f8ae0"/><path d="M5 1H15.5L9 8V15L5 11Z" fill="#3f8ae0"/><path d="M0.8 8.5V13H4" stroke="#3f8ae0" stroke-width="1.1" fill="none"/></svg>
<svg style="left:455px;top:525px" width="9" height="11" viewBox="0 0 9 11"><path d="M0.5 0.5H8.5V6.5L4.5 10.5L0.5 6.5Z" fill="#b8b8b8"/></svg>
<svg style="left:486px;top:523px" width="15" height="15" viewBox="0 0 15 15"><path d="M13.5 13.5L7 7" stroke="#c0c0c0" stroke-width="2.8" stroke-linecap="round"/><path d="M5.5 1A4 4 0 0 1 9 6.5L6.5 9A4 4 0 0 1 1 5.5L3.5 7L7 3.5Z" fill="#c0c0c0"/></svg>
<svg style="left:519px;top:525px" width="16" height="11" viewBox="0 0 16 11"><rect x="0" y="0" width="16" height="11" rx="1.5" fill="#454545"/><path d="M6.5 3.5A2.2 2.2 0 1 0 6.5 7.5M12.5 3.5A2.2 2.2 0 1 0 12.5 7.5" stroke="#222222" stroke-width="1.6" fill="none"/></svg>
<!-- ruler -->
<div class="t" style="left:565px;top:514px;font-size:10.5px;color:#a8a8a8">;00;00</div>
<div class="t" style="left:625px;top:514px;font-size:10.5px;color:#a8a8a8">00;00;04;00</div>
<div class="t" style="left:711px;top:514px;font-size:10.5px;color:#a8a8a8">00;00;08;00</div>
<div class="t" style="left:797px;top:514px;font-size:10.5px;color:#a8a8a8">00;00;12;00</div>
<div class="t" style="left:883px;top:514px;font-size:10.5px;color:#a8a8a8">00;00;16;00</div>
<div class="t" style="left:970px;top:514px;font-size:10.5px;color:#a8a8a8">00;00;20;00</div>
<div class="a" style="left:565px;top:532px;width:491px;height:6px;background:repeating-linear-gradient(90deg,#5a5a5a 0 1px,transparent 1px 5.41px)"></div>
<div class="a" style="left:565px;top:526px;width:491px;height:12px;background:repeating-linear-gradient(90deg,#6a6a6a 0 1px,transparent 1px 86.6px)"></div>
<div class="a" style="left:565px;top:538px;width:404px;height:2px;background:#e6dc5a"></div>
<div class="a" style="left:564px;top:540px;width:1px;height:201px;background:#2e2e2e"></div>
<!-- track rows -->
<div class="a" style="left:328px;top:562px;width:728px;height:1px;background:#2c2c2c"></div>
<div class="a" style="left:328px;top:587px;width:728px;height:1px;background:#2c2c2c"></div>
<div class="a" style="left:328px;top:612px;width:728px;height:1px;background:#2c2c2c"></div>
<div class="a" style="left:328px;top:637px;width:740px;height:5px;background:#2a2a2a"></div>
<div class="a" style="left:328px;top:666px;width:728px;height:1px;background:#2c2c2c"></div>
<div class="a" style="left:328px;top:691px;width:728px;height:1px;background:#2c2c2c"></div>
<div class="a" style="left:328px;top:716px;width:728px;height:1px;background:#2c2c2c"></div>
<div class="a" style="left:425px;top:563px;width:53px;height:74px;background:#262626"></div>
<div class="a" style="left:425px;top:642px;width:115px;height:74px;background:#262626"></div>
<div class="a" style="left:393px;top:613px;width:32px;height:24px;background:#1f5a9a"></div>
<div class="a" style="left:393px;top:642px;width:32px;height:24px;background:#1f5a9a"></div>
<div class="a" style="left:393px;top:667px;width:32px;height:24px;background:#1f5a9a"></div>
<div class="a" style="left:393px;top:692px;width:32px;height:24px;background:#1f5a9a"></div>
<div class="t" style="left:403px;top:571px;font-size:10.5px;color:#9a9a9a">V3</div>
<div class="t" style="left:403px;top:596px;font-size:10.5px;color:#9a9a9a">V2</div>
<div class="t" style="left:403px;top:621px;font-size:10.5px;color:#c8d8f0">V1</div>
<div class="t" style="left:403px;top:650px;font-size:10.5px;color:#c8d8f0">A1</div>
<div class="t" style="left:403px;top:675px;font-size:10.5px;color:#c8d8f0">A2</div>
<div class="t" style="left:403px;top:700px;font-size:10.5px;color:#c8d8f0">A3</div>
<svg style="left:378px;top:569px" width="10" height="10" viewBox="0 0 10 10"><path d="M2.3 4.5V2.8A2.6 2.6 0 0 1 7.5 2.3" stroke="#b0b0b0" stroke-width="1.4" fill="none"/><rect x="0.5" y="4.5" width="9" height="5.5" fill="#b0b0b0"/><rect x="4.3" y="6" width="1.4" height="2.5" fill="#222222"/></svg><svg style="left:378px;top:594px" width="10" height="10" viewBox="0 0 10 10"><path d="M2.3 4.5V2.8A2.6 2.6 0 0 1 7.5 2.3" stroke="#b0b0b0" stroke-width="1.4" fill="none"/><rect x="0.5" y="4.5" width="9" height="5.5" fill="#b0b0b0"/><rect x="4.3" y="6" width="1.4" height="2.5" fill="#222222"/></svg><svg style="left:378px;top:619px" width="10" height="10" viewBox="0 0 10 10"><path d="M2.3 4.5V2.8A2.6 2.6 0 0 1 7.5 2.3" stroke="#b0b0b0" stroke-width="1.4" fill="none"/><rect x="0.5" y="4.5" width="9" height="5.5" fill="#b0b0b0"/><rect x="4.3" y="6" width="1.4" height="2.5" fill="#222222"/></svg><svg style="left:378px;top:648px" width="10" height="10" viewBox="0 0 10 10"><path d="M2.3 4.5V2.8A2.6 2.6 0 0 1 7.5 2.3" stroke="#b0b0b0" stroke-width="1.4" fill="none"/><rect x="0.5" y="4.5" width="9" height="5.5" fill="#b0b0b0"/><rect x="4.3" y="6" width="1.4" height="2.5" fill="#222222"/></svg><svg style="left:378px;top:673px" width="10" height="10" viewBox="0 0 10 10"><path d="M2.3 4.5V2.8A2.6 2.6 0 0 1 7.5 2.3" stroke="#b0b0b0" stroke-width="1.4" fill="none"/><rect x="0.5" y="4.5" width="9" height="5.5" fill="#b0b0b0"/><rect x="4.3" y="6" width="1.4" height="2.5" fill="#222222"/></svg><svg style="left:378px;top:698px" width="10" height="10" viewBox="0 0 10 10"><path d="M2.3 4.5V2.8A2.6 2.6 0 0 1 7.5 2.3" stroke="#b0b0b0" stroke-width="1.4" fill="none"/><rect x="0.5" y="4.5" width="9" height="5.5" fill="#b0b0b0"/><rect x="4.3" y="6" width="1.4" height="2.5" fill="#222222"/></svg><svg style="left:378px;top:723px" width="10" height="10" viewBox="0 0 10 10"><path d="M2.3 4.5V2.8A2.6 2.6 0 0 1 7.5 2.3" stroke="#b0b0b0" stroke-width="1.4" fill="none"/><rect x="0.5" y="4.5" width="9" height="5.5" fill="#b0b0b0"/><rect x="4.3" y="6" width="1.4" height="2.5" fill="#222222"/></svg><svg style="left:432px;top:570px" width="13" height="11" viewBox="0 0 13 11"><path d="M0.8 0.8H7.5V4.5H0.8Z M0.8 6H7.5V10.2H0.8Z" stroke="#b8b8b8" stroke-width="1.4" fill="none"/><path d="M7.5 2.6H10.5V8.2H7.5M10.5 5.5H12.5" stroke="#b8b8b8" stroke-width="1.4" fill="none"/></svg><svg style="left:432px;top:595px" width="13" height="11" viewBox="0 0 13 11"><path d="M0.8 0.8H7.5V4.5H0.8Z M0.8 6H7.5V10.2H0.8Z" stroke="#b8b8b8" stroke-width="1.4" fill="none"/><path d="M7.5 2.6H10.5V8.2H7.5M10.5 5.5H12.5" stroke="#b8b8b8" stroke-width="1.4" fill="none"/></svg><svg style="left:432px;top:620px" width="13" height="11" viewBox="0 0 13 11"><path d="M0.8 0.8H7.5V4.5H0.8Z M0.8 6H7.5V10.2H0.8Z" stroke="#b8b8b8" stroke-width="1.4" fill="none"/><path d="M7.5 2.6H10.5V8.2H7.5M10.5 5.5H12.5" stroke="#b8b8b8" stroke-width="1.4" fill="none"/></svg><svg style="left:432px;top:649px" width="13" height="11" viewBox="0 0 13 11"><path d="M0.8 0.8H7.5V4.5H0.8Z M0.8 6H7.5V10.2H0.8Z" stroke="#b8b8b8" stroke-width="1.4" fill="none"/><path d="M7.5 2.6H10.5V8.2H7.5M10.5 5.5H12.5" stroke="#b8b8b8" stroke-width="1.4" fill="none"/></svg><svg style="left:432px;top:674px" width="13" height="11" viewBox="0 0 13 11"><path d="M0.8 0.8H7.5V4.5H0.8Z M0.8 6H7.5V10.2H0.8Z" stroke="#b8b8b8" stroke-width="1.4" fill="none"/><path d="M7.5 2.6H10.5V8.2H7.5M10.5 5.5H12.5" stroke="#b8b8b8" stroke-width="1.4" fill="none"/></svg><svg style="left:432px;top:699px" width="13" height="11" viewBox="0 0 13 11"><path d="M0.8 0.8H7.5V4.5H0.8Z M0.8 6H7.5V10.2H0.8Z" stroke="#b8b8b8" stroke-width="1.4" fill="none"/><path d="M7.5 2.6H10.5V8.2H7.5M10.5 5.5H12.5" stroke="#b8b8b8" stroke-width="1.4" fill="none"/></svg><svg style="left:459px;top:571px" width="13" height="9" viewBox="0 0 13 9"><path d="M0.5 4.5C3 0 10 0 12.5 4.5C10 9 3 9 0.5 4.5Z" fill="#c0c0c0"/><circle cx="6.5" cy="4.5" r="2.2" fill="#222222"/><circle cx="6.5" cy="4.5" r="1" fill="#c0c0c0"/></svg><svg style="left:459px;top:596px" width="13" height="9" viewBox="0 0 13 9"><path d="M0.5 4.5C3 0 10 0 12.5 4.5C10 9 3 9 0.5 4.5Z" fill="#c0c0c0"/><circle cx="6.5" cy="4.5" r="2.2" fill="#222222"/><circle cx="6.5" cy="4.5" r="1" fill="#c0c0c0"/></svg><svg style="left:459px;top:621px" width="13" height="9" viewBox="0 0 13 9"><path d="M0.5 4.5C3 0 10 0 12.5 4.5C10 9 3 9 0.5 4.5Z" fill="#c0c0c0"/><circle cx="6.5" cy="4.5" r="2.2" fill="#222222"/><circle cx="6.5" cy="4.5" r="1" fill="#c0c0c0"/></svg><svg style="left:514px;top:647px" width="11" height="14" viewBox="0 0 11 14"><rect x="3" y="0" width="5" height="9" rx="2.5" fill="#c0c0c0"/><path d="M1 6.5A4.5 4.5 0 0 0 10 6.5M5.5 11V13.5M2.5 13.5H8.5" stroke="#c0c0c0" stroke-width="1" fill="none"/></svg><svg style="left:514px;top:672px" width="11" height="14" viewBox="0 0 11 14"><rect x="3" y="0" width="5" height="9" rx="2.5" fill="#c0c0c0"/><path d="M1 6.5A4.5 4.5 0 0 0 10 6.5M5.5 11V13.5M2.5 13.5H8.5" stroke="#c0c0c0" stroke-width="1" fill="none"/></svg><svg style="left:514px;top:697px" width="11" height="14" viewBox="0 0 11 14"><rect x="3" y="0" width="5" height="9" rx="2.5" fill="#c0c0c0"/><path d="M1 6.5A4.5 4.5 0 0 0 10 6.5M5.5 11V13.5M2.5 13.5H8.5" stroke="#c0c0c0" stroke-width="1" fill="none"/></svg>
<div class="t" style="left:461px;top:650px;font-size:10.5px;color:#b0b0b0">M</div>
<div class="t" style="left:461px;top:675px;font-size:10.5px;color:#b0b0b0">M</div>
<div class="t" style="left:461px;top:700px;font-size:10.5px;color:#b0b0b0">M</div>
<div class="t" style="left:489px;top:650px;font-size:10.5px;color:#b0b0b0">S</div>
<div class="t" style="left:489px;top:675px;font-size:10.5px;color:#b0b0b0">S</div>
<div class="t" style="left:489px;top:700px;font-size:10.5px;color:#b0b0b0">S</div>
<div class="t" style="left:395px;top:724px;font-size:11.5px;color:#a0a0a0">Mix</div>
<div class="t" style="left:474px;top:725px;font-size:11px;color:#4a9ff5">0,0</div>
<svg style="left:545px;top:719px" width="12" height="10" viewBox="0 0 12 10"><path d="M0.5 0.5L5.5 5L0.5 9.5Z M11.5 0.5L6.5 5L11.5 9.5Z" fill="#c0c0c0"/><path d="M0.5 0.5V9.5M11.5 0.5V9.5" stroke="#c0c0c0" stroke-width="1.2"/></svg>
<!-- clips V2 -->
<div class="a" style="left:565px;top:588px;width:403px;height:24px;background:#e48ae4"></div>
<div class="a" style="left:633px;top:588px;width:1px;height:24px;background:#5a3a5a"></div>
<div class="a" style="left:728px;top:588px;width:1px;height:24px;background:#5a3a5a"></div>
<div class="a" style="left:808px;top:588px;width:1px;height:24px;background:#5a3a5a"></div>
<div class="a" style="left:898px;top:588px;width:1px;height:24px;background:#5a3a5a"></div>
<!-- clips V1 -->
<div class="a" style="left:565px;top:613px;width:403px;height:24px;background:#7c9fd6"></div>
<div class="a" style="left:565px;top:613px;width:68px;height:24px;background:#e4e4e4"></div>
<div class="a" style="left:569px;top:617px;width:60px;height:16px;background:#7c9fd6"></div>
<div class="a" style="left:633px;top:613px;width:1px;height:24px;background:#2a3a5a"></div>
<div class="a" style="left:728px;top:613px;width:1px;height:24px;background:#2a3a5a"></div>
<div class="a" style="left:808px;top:613px;width:1px;height:24px;background:#2a3a5a"></div>
<div class="a" style="left:898px;top:613px;width:1px;height:24px;background:#2a3a5a"></div>
<svg style="left:722px;top:613px" width="6" height="6" viewBox="0 0 6 6"><path d="M0 0H6V6Z" fill="#e8e8e8"/></svg>
<svg style="left:809px;top:613px" width="6" height="6" viewBox="0 0 6 6"><path d="M0 0H6L0 6Z" fill="#e8e8e8"/></svg>
<svg style="left:899px;top:613px" width="6" height="6" viewBox="0 0 6 6"><path d="M0 0H6L0 6Z" fill="#e8e8e8"/></svg>
<div class="a" style="left:575px;top:593px;width:11px;height:9px;background:#3aa03a"></div><div class="t" style="left:576px;top:594px;font-size:9px;font-style:italic;color:#0a3a0a">fx</div><div class="a" style="left:645px;top:593px;width:11px;height:9px;background:#b090e0"></div><div class="t" style="left:646px;top:594px;font-size:9px;font-style:italic;color:#5a3a9a">fx</div><div class="a" style="left:739px;top:593px;width:11px;height:9px;background:#b090e0"></div><div class="t" style="left:740px;top:594px;font-size:9px;font-style:italic;color:#5a3a9a">fx</div><div class="a" style="left:819px;top:593px;width:11px;height:9px;background:#b090e0"></div><div class="t" style="left:820px;top:594px;font-size:9px;font-style:italic;color:#5a3a9a">fx</div><div class="a" style="left:909px;top:593px;width:11px;height:9px;background:#b090e0"></div><div class="t" style="left:910px;top:594px;font-size:9px;font-style:italic;color:#5a3a9a">fx</div><div class="a" style="left:575px;top:617px;width:11px;height:9px;background:#f0c848"></div><div class="t" style="left:576px;top:618px;font-size:9px;font-style:italic;color:#8a6a10">fx</div><div class="a" style="left:645px;top:617px;width:11px;height:9px;background:#f0c848"></div><div class="t" style="left:646px;top:618px;font-size:9px;font-style:italic;color:#8a6a10">fx</div><div class="a" style="left:739px;top:617px;width:11px;height:9px;background:#f0c848"></div><div class="t" style="left:740px;top:618px;font-size:9px;font-style:italic;color:#8a6a10">fx</div><div class="a" style="left:819px;top:617px;width:11px;height:9px;background:#f0c848"></div><div class="t" style="left:820px;top:618px;font-size:9px;font-style:italic;color:#8a6a10">fx</div><div class="a" style="left:909px;top:617px;width:11px;height:9px;background:#f0c848"></div><div class="t" style="left:910px;top:618px;font-size:9px;font-style:italic;color:#8a6a10">fx</div><div class="t" style="left:593px;top:592px;width:40px;overflow:hidden;font-size:10.5px;letter-spacing:-0.4px;color:#1a1a2a">Adjustment Layer</div><div class="t" style="left:663px;top:592px;width:64px;overflow:hidden;font-size:10.5px;letter-spacing:-0.4px;color:#1a1a2a">Adjustment Layer</div><div class="t" style="left:757px;top:592px;width:50px;overflow:hidden;font-size:10.5px;letter-spacing:-0.4px;color:#1a1a2a">Adjustment Layer</div><div class="t" style="left:837px;top:592px;width:60px;overflow:hidden;font-size:10.5px;letter-spacing:-0.4px;color:#1a1a2a">Adjustment Layer</div><div class="t" style="left:927px;top:592px;width:40px;overflow:hidden;font-size:10.5px;letter-spacing:-0.4px;color:#1a1a2a">Adjustment Layer</div><div class="t" style="left:593px;top:617px;width:31px;overflow:hidden;font-size:10.5px;letter-spacing:-0.4px;color:#1a1a2a">MVI_0874.MP4</div><div class="t" style="left:663px;top:617px;width:64px;overflow:hidden;font-size:10.5px;letter-spacing:-0.4px;color:#1a1a2a">MVI_0853.MP4</div><div class="t" style="left:757px;top:617px;width:50px;overflow:hidden;font-size:10.5px;letter-spacing:-0.4px;color:#1a1a2a">MVI_0865.MP4</div><div class="t" style="left:837px;top:617px;width:60px;overflow:hidden;font-size:10.5px;letter-spacing:-0.4px;color:#1a1a2a">MVI_0873.MP4</div><div class="t" style="left:927px;top:617px;width:40px;overflow:hidden;font-size:10.5px;letter-spacing:-0.4px;color:#1a1a2a">MVI_0866.MP4</div>
<!-- A1 audio -->
<div class="a" style="left:565px;top:642px;width:403px;height:24px;background:#58d69a;overflow:hidden">
 <svg style="left:0;top:0" width="403" height="24" viewBox="0 0 403 24">
  <path d="M0 0H403V4.5L403 4.8L401 5.1L399 5.3L397 5.7L395 5.1L393 5.6L391 3.3L389 4.4L387 5.7L385 4.9L383 5.5L381 3.5L379 4.4L377 3.8L375 4.6L373 4.7L371 3.2L369 3.8L367 3.9L365 5.6L363 5.2L361 3.6L359 5.3L357 3.6L355 4.8L353 3.5L351 3.2L349 5.5L347 3.7L345 3.8L343 5.8L341 5.5L339 4.0L337 5.7L335 4.6L333 5.0L331 3.7L329 5.6L327 5.0L325 5.7L323 5.5L321 4.0L319 4.1L317 3.6L315 3.6L313 3.4L311 4.0L309 4.8L307 3.2L305 5.0L303 4.1L301 4.0L299 5.3L297 4.4L295 4.0L293 4.5L291 5.0L289 3.3L287 5.7L285 3.3L283 5.1L281 5.4L279 3.2L277 5.2L275 4.2L273 4.7L271 3.2L269 3.3L267 3.7L265 5.7L263 3.7L261 5.2L259 5.6L257 5.6L255 4.1L253 4.1L251 4.6L249 5.2L247 3.5L245 5.1L243 5.3L241 5.4L239 3.3L237 5.7L235 3.4L233 4.1L231 4.8L229 5.6L227 4.1L225 5.6L223 4.6L221 4.0L219 4.0L217 3.7L215 3.4L213 3.6L211 5.0L209 5.8L207 3.6L205 3.3L203 5.8L201 4.6L199 4.3L197 3.8L195 4.7L193 5.3L191 4.4L189 4.3L187 3.3L185 5.6L183 3.3L181 4.5L179 5.4L177 3.5L175 5.1L173 5.7L171 4.8L169 5.2L167 3.5L165 4.3L163 3.6L161 5.4L159 4.0L157 4.4L155 5.8L153 5.4L151 5.7L149 4.4L147 4.5L145 5.1L143 4.4L141 4.0L139 4.2L137 3.6L135 4.2L133 5.8L131 5.7L129 4.8L127 4.5L125 4.1L123 3.4L121 3.9L119 5.2L117 5.5L115 4.1L113 5.2L111 5.2L109 5.0L107 4.9L105 5.2L103 4.1L101 5.0L99 3.9L97 4.5L95 5.2L93 5.0L91 4.0L89 5.7L87 4.9L85 4.7L83 3.2L81 4.6L79 5.1L77 6.1L75 5.6L73 6.5L71 6.1L69 6.5L67 5.3L65 6.1L63 6.3L61 6.6L59 5.3L57 6.6L55 6.7L53 6.2L51 6.9L49 6.9L47 5.7L45 5.8L43 4.8L41 6.6L39 6.8L37 5.6L35 6.2L33 6.3L31 6.3L29 4.8L27 6.4L25 5.9L23 6.1L21 5.5L19 6.0L17 6.4L15 6.1L13 6.3L11 4.5L9 4.8L7 5.5L5 6.1L3 5.0L1 6.2Z" fill="#2f7d4e"/>
  <path d="M0 11.5H403V15.0L403 15.3L401 13.8L399 14.9L397 14.3L395 13.8L393 14.0L391 14.5L389 14.2L387 14.2L385 13.8L383 14.9L381 14.7L379 15.3L377 15.2L375 14.3L373 16.0L371 13.7L369 14.8L367 14.4L365 14.8L363 14.0L361 15.9L359 14.7L357 13.8L355 15.3L353 13.9L351 15.1L349 14.6L347 15.2L345 16.2L343 15.8L341 14.8L339 15.8L337 15.4L335 14.7L333 14.1L331 15.2L329 15.2L327 16.2L325 16.2L323 15.3L321 14.6L319 16.0L317 13.7L315 14.0L313 15.2L311 15.3L309 14.1L307 15.3L305 16.0L303 14.7L301 14.8L299 14.3L297 14.5L295 16.2L293 14.7L291 16.2L289 16.1L287 15.2L285 14.4L283 16.3L281 15.0L279 14.8L277 14.5L275 16.3L273 15.0L271 14.4L269 14.9L267 14.0L265 15.3L263 14.9L261 14.5L259 15.7L257 15.8L255 13.7L253 15.1L251 14.4L249 16.1L247 15.7L245 14.3L243 14.4L241 14.1L239 16.3L237 14.5L235 15.3L233 14.9L231 15.4L229 15.3L227 15.6L225 14.0L223 15.7L221 14.5L219 15.1L217 14.6L215 14.5L213 15.1L211 14.9L209 14.6L207 15.6L205 15.2L203 13.8L201 14.4L199 14.9L197 16.1L195 16.0L193 15.1L191 13.7L189 15.7L187 14.8L185 15.2L183 15.5L181 15.3L179 15.0L177 16.1L175 14.7L173 14.7L171 15.9L169 14.2L167 14.5L165 15.9L163 13.9L161 15.9L159 15.5L157 14.8L155 14.4L153 15.7L151 16.1L149 14.1L147 14.9L145 15.1L143 15.0L141 14.6L139 14.1L137 15.2L135 15.8L133 13.9L131 14.3L129 15.8L127 15.8L125 15.4L123 13.8L121 15.6L119 16.2L117 16.3L115 15.5L113 13.8L111 15.9L109 14.3L107 15.4L105 16.2L103 15.6L101 14.1L99 14.5L97 16.1L95 14.1L93 15.3L91 14.8L89 14.1L87 15.3L85 13.8L83 14.0L81 14.7L79 15.1L77 15.0L75 16.4L73 16.8L71 17.2L69 15.2L67 16.0L65 15.7L63 16.5L61 16.2L59 17.3L57 15.9L55 15.0L53 16.7L51 15.3L49 16.5L47 16.2L45 17.3L43 16.3L41 16.5L39 15.6L37 16.3L35 15.6L33 16.9L31 16.2L29 15.2L27 15.5L25 15.9L23 16.8L21 15.4L19 16.8L17 16.6L15 15.1L13 16.6L11 15.1L9 15.2L7 16.4L5 15.5L3 17.2L1 16.1Z" fill="#2f7d4e"/>
 </svg>
</div>
<div class="a" style="left:575px;top:645px;width:11px;height:10px;background:#5a5a5a;border:1px solid #8a8a8a"></div>
<div class="t" style="left:576px;top:647px;font-size:9px;font-style:italic;color:#2a2a2a">fx</div>
<!-- playhead -->
<div class="a" style="left:598px;top:536px;width:1px;height:205px;background:#3b8ef0"></div>
<svg style="left:593px;top:526px" width="12" height="12" viewBox="0 0 12 12"><path d="M0.5 0.5H11.5V7.5L7 11.5H5L0.5 7.5Z" fill="#3b8ef0"/></svg>
<!-- scrollbars -->
<div class="a" style="left:1057px;top:548px;width:11px;height:84px;background:#2c2c2c;border-radius:5px"></div>
<div class="a" style="left:1057px;top:647px;width:11px;height:88px;background:#2c2c2c;border-radius:5px"></div>
<div class="a" style="left:1057px;top:543px;width:11px;height:11px;border-radius:6px;border:2px solid #a8a8a8;background:#222222"></div>
<div class="a" style="left:1057px;top:625px;width:11px;height:11px;border-radius:6px;border:2px solid #a8a8a8;background:#222222"></div>
<div class="a" style="left:1057px;top:642px;width:11px;height:11px;border-radius:6px;border:2px solid #a8a8a8;background:#222222"></div>
<div class="a" style="left:1057px;top:727px;width:11px;height:11px;border-radius:6px;border:2px solid #a8a8a8;background:#222222"></div>
<div class="a" style="left:341px;top:741px;width:715px;height:10px;background:#262626;border-radius:5px"></div>
<div class="a" style="left:346px;top:741px;width:158px;height:10px;background:#333"></div>
<div class="a" style="left:341px;top:741px;width:11px;height:11px;border-radius:6px;border:2px solid #a8a8a8;background:#222222"></div>
<div class="a" style="left:498px;top:741px;width:11px;height:11px;border-radius:6px;border:2px solid #a8a8a8;background:#222222"></div>

<!-- AUDIO METER -->
<div class="a" style="left:1098px;top:493px;width:37px;height:238px;background:#1d1d1d;border:1px solid #050505"></div>
<div class="a" style="left:1099px;top:502px;width:35px;height:1px;background:#050505"></div>
<div class="a" style="left:1116px;top:494px;width:1px;height:9px;background:#0a0a0a"></div><div class="a" style="left:1116px;top:503px;width:1px;height:227px;background:#191919"></div>
<div class="a" style="left:1099px;top:728px;width:17px;height:2px;background:#d8cc78"></div>
<div class="a" style="left:1117px;top:728px;width:17px;height:2px;background:#d8cc78"></div>
<div class="a" style="left:1135px;top:503px;width:4px;height:227px;background:repeating-linear-gradient(180deg,#7a7a7a 0 1px,transparent 1px 3.74px)"></div>
<div class="t" style="left:1142px;top:501.4px;font-size:9px;color:#a8a8a8">0</div>
<div class="t" style="left:1142px;top:523.8px;font-size:9px;color:#a8a8a8">-6</div>
<div class="t" style="left:1142px;top:545.9px;font-size:9px;color:#a8a8a8">-12</div>
<div class="t" style="left:1142px;top:568.5px;font-size:9px;color:#a8a8a8">-18</div>
<div class="t" style="left:1142px;top:591.0px;font-size:9px;color:#a8a8a8">-24</div>
<div class="t" style="left:1142px;top:613.6px;font-size:9px;color:#a8a8a8">-30</div>
<div class="t" style="left:1142px;top:635.6px;font-size:9px;color:#a8a8a8">-36</div>
<div class="t" style="left:1142px;top:658.5px;font-size:9px;color:#a8a8a8">-42</div>
<div class="t" style="left:1142px;top:680.6px;font-size:9px;color:#a8a8a8">-48</div>
<div class="t" style="left:1142px;top:703.3px;font-size:9px;color:#a8a8a8">-54</div>
<div class="t" style="left:1142px;top:723.5px;font-size:9px;color:#a8a8a8">dB</div>

<div class="a" style="left:1099px;top:735px;width:17px;height:17px;background:#1e1e1e;border:1px solid #303030"></div>
<div class="a" style="left:1117px;top:735px;width:17px;height:17px;background:#1e1e1e;border:1px solid #303030"></div>
<div class="t" style="left:1104px;top:739px;font-size:10px;color:#b0b0b0">S</div>
<div class="t" style="left:1122px;top:739px;font-size:10px;color:#b0b0b0">S</div>
<!-- STATUS BAR -->
<svg style="left:2px;top:768px" width="17" height="15" viewBox="0 0 17 15"><path d="M5 13.5A4.2 4.2 0 0 1 4.5 5.2A5.2 5.2 0 0 1 14 5.5A4 4 0 0 1 12.5 13.5Z" stroke="#b8b8b8" stroke-width="1.3" fill="none"/><path d="M6 11C8 8 9 7 11 8" stroke="#b8b8b8" stroke-width="1.3" fill="none"/></svg>
<div class="a" style="left:1414px;top:768px;width:1px;height:19px;background:#1a1a1a"></div>
</body></html>
